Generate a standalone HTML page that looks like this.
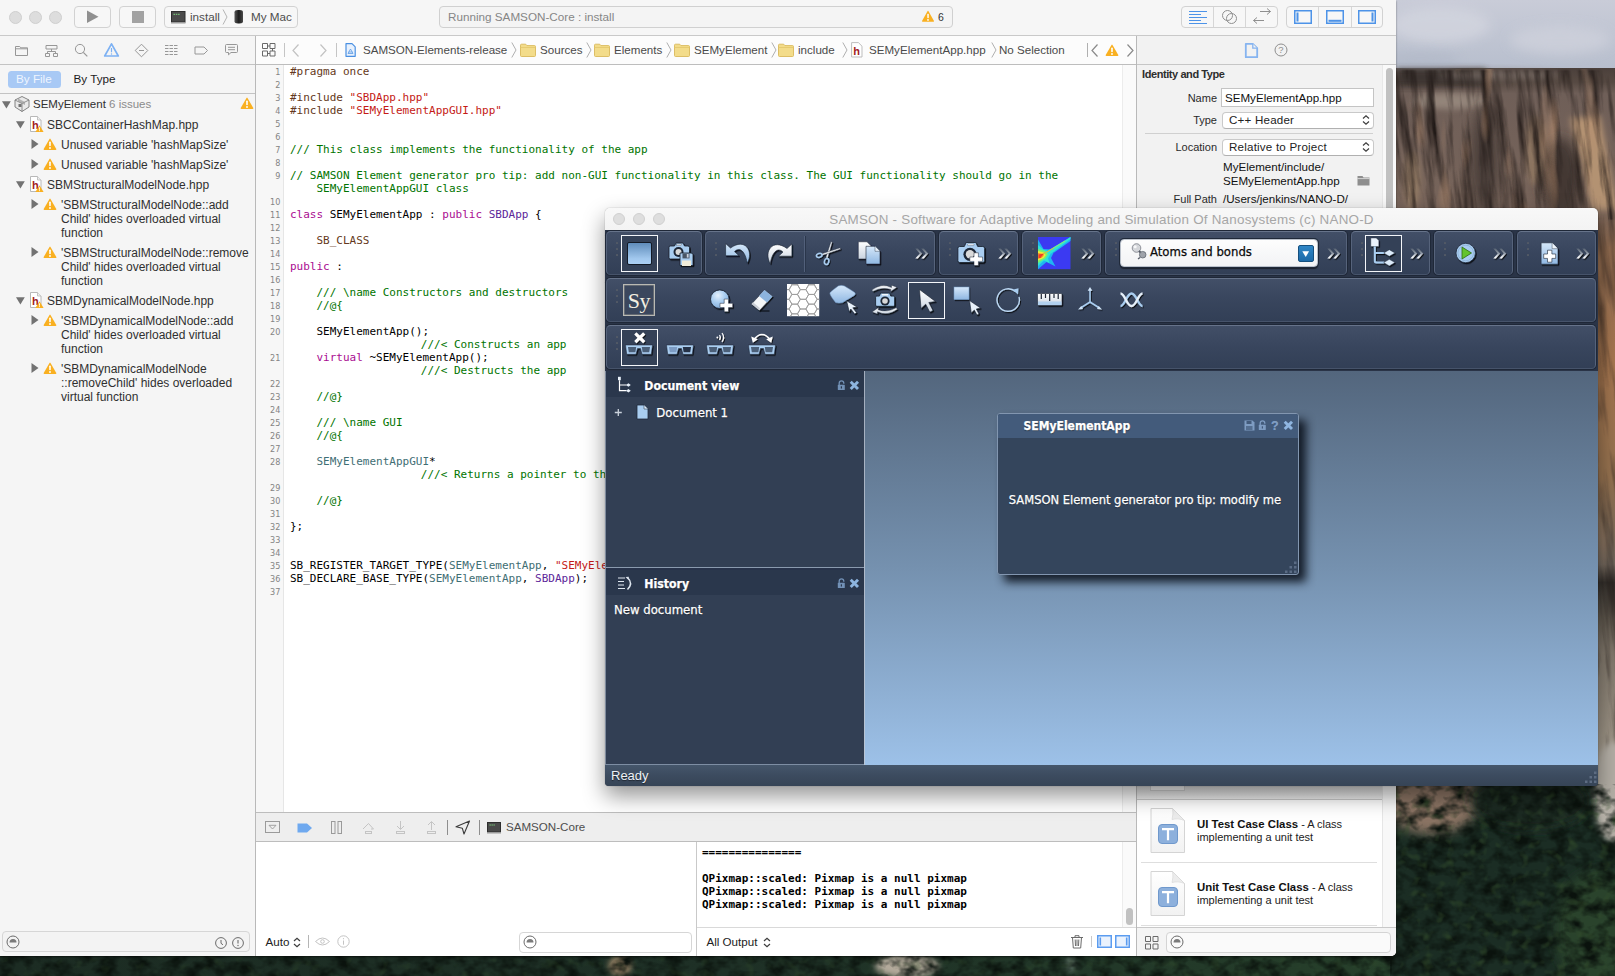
<!DOCTYPE html>
<html><head><meta charset="utf-8"><title>Xcode + SAMSON</title>
<style>
html,body{margin:0;padding:0}
body{width:1615px;height:976px;position:relative;overflow:hidden;background:#1f2e25;font-family:"Liberation Sans",sans-serif;font-size:11px;color:#262626}
.a{position:absolute}
.t{position:absolute;white-space:nowrap;line-height:14px}
svg{position:absolute;overflow:visible}
#xcode{position:absolute;left:0;top:0;width:1396px;height:956px;background:#f5f5f5;border-radius:0 0 5px 0;overflow:hidden;box-shadow:0 1px 2px rgba(0,0,0,.55)}
.hl{position:absolute;height:1px;background:#c3c3c3}
.vl{position:absolute;width:1px;background:#c3c3c3}
.btn{position:absolute;box-sizing:border-box;border:1px solid #d2d2d2;border-radius:4px;background:#f7f7f7}
.code{position:absolute;white-space:pre;font-family:"DejaVu Sans Mono","Liberation Mono",monospace;font-size:11px;line-height:13px;color:#000;left:290px}
.ln{position:absolute;width:24.300px;left:256px;text-align:right;font-family:"DejaVu Sans Condensed","Liberation Sans",sans-serif;font-size:9px;line-height:13px;color:#848484}
.c{color:#007400}.s{color:#c41a16}.k{color:#aa0d91}.p{color:#643820}.y{color:#3f6e74}.u{color:#5c2699}
.nav{position:absolute;white-space:nowrap;font-size:11.5px;line-height:14px;color:#262626;letter-spacing:0.1px}
#samson{position:absolute;left:605px;top:208px;width:993px;height:578px;border-radius:5px 5px 4px 4px;background:transparent;box-shadow:0 10px 22px rgba(0,0,0,.42),0 0 1px rgba(0,0,0,.5)}
.tb{position:absolute;box-sizing:border-box;border:1px solid #56637b;border-top-color:#66738a;border-bottom-color:#46536a;border-radius:4.5px;background:linear-gradient(#424f67,#39465e 45%,#323f56);box-shadow:0 0 0 1px #1f2838}
.sf{font-family:"DejaVu Sans Condensed","DejaVu Sans",sans-serif;-webkit-text-stroke:0.25px currentColor}
</style></head><body>
<!--WALL-->
<svg width="1615" height="976" style="left:0;top:0">
<defs>
<linearGradient id="gsky" x1="0" y1="0" x2="0" y2="1"><stop offset="0" stop-color="#c9ccd8"/><stop offset="1" stop-color="#b7becd"/></linearGradient>
<linearGradient id="grock" x1="0" y1="0" x2="0" y2="1">
<stop offset="0" stop-color="#4b403b"/><stop offset="0.02" stop-color="#574a43"/><stop offset="0.035" stop-color="#6f5f58"/>
<stop offset="0.19" stop-color="#77645a"/><stop offset="0.25" stop-color="#966f52"/><stop offset="0.4" stop-color="#a6764f"/><stop offset="0.56" stop-color="#94714f"/>
<stop offset="0.68" stop-color="#70665c"/><stop offset="0.705" stop-color="#34302c"/><stop offset="0.75" stop-color="#5d564c"/><stop offset="0.8" stop-color="#7f766a"/>
<stop offset="0.92" stop-color="#9d9486"/><stop offset="1" stop-color="#a8a195"/></linearGradient>
<linearGradient id="gtree" x1="0" y1="0" x2="1" y2="0"><stop offset="0" stop-color="#1c2c23"/><stop offset="0.45" stop-color="#1e3026"/><stop offset="0.75" stop-color="#233a29"/><stop offset="1" stop-color="#2c482d"/></linearGradient>
<filter id="fstreak" x="0" y="0" width="100%" height="100%" color-interpolation-filters="sRGB"><feTurbulence type="fractalNoise" baseFrequency="0.11 0.012" numOctaves="4" seed="4"/><feColorMatrix type="matrix" values="0 0 0 0 0.13  0 0 0 0 0.1  0 0 0 0 0.09  2.3 0 0 0 -0.95"/><feComposite in2="SourceGraphic" operator="in"/></filter>
<filter id="flight" x="0" y="0" width="100%" height="100%" color-interpolation-filters="sRGB"><feTurbulence type="fractalNoise" baseFrequency="0.05 0.012" numOctaves="2" seed="11"/><feColorMatrix type="matrix" values="0 0 0 0 0.72  0 0 0 0 0.56  0 0 0 0 0.44  0 2.4 0 0 -1.45"/><feComposite in2="SourceGraphic" operator="in"/></filter>
<filter id="ftree" x="0" y="0" width="100%" height="100%" color-interpolation-filters="sRGB"><feTurbulence type="fractalNoise" baseFrequency="0.06 0.08" numOctaves="3" seed="7"/><feColorMatrix type="matrix" values="0 0 0 0 0.04  0 0 0 0 0.07  0 0 0 0 0.05  2.4 0 0 0 -0.9"/><feComposite in2="SourceGraphic" operator="in"/></filter>
<filter id="ftreel" x="0" y="0" width="100%" height="100%" color-interpolation-filters="sRGB"><feTurbulence type="fractalNoise" baseFrequency="0.09 0.1" numOctaves="2" seed="21"/><feColorMatrix type="matrix" values="0 0 0 0 0.2  0 0 0 0 0.3  0 0 0 0 0.17  0 2 0 0 -1.12"/><feComposite in2="SourceGraphic" operator="in"/></filter>
<filter id="blur3" x="-60%" y="-60%" width="220%" height="220%"><feGaussianBlur stdDeviation="3"/></filter>
<filter id="blur6" x="-80%" y="-80%" width="260%" height="260%"><feGaussianBlur stdDeviation="6"/></filter>
</defs>
<rect x="0" y="940" width="1615" height="36" fill="url(#gtree)"/>
<rect x="1390" y="0" width="225" height="72" fill="url(#gsky)"/>
<rect x="1390" y="68" width="225" height="730" fill="url(#grock)"/>
<ellipse cx="1440" cy="25" rx="50" ry="18" fill="#d3d5df" filter="url(#blur6)" opacity=".8"/><ellipse cx="1560" cy="40" rx="50" ry="14" fill="#d0d3dd" filter="url(#blur6)" opacity=".7"/><ellipse cx="1420" cy="60" rx="40" ry="8" fill="#b2b9c8" filter="url(#blur6)" opacity=".8"/><rect x="1396" y="69" width="90" height="17" fill="#3d3431" filter="url(#blur3)"/><ellipse cx="1450" cy="101" rx="38" ry="8" fill="#9a8b80" filter="url(#blur3)" opacity=".85"/><path d="M1570 118 L1600 116 L1618 210 L1592 210 Z" fill="#b39272" filter="url(#blur3)"/><ellipse cx="1560" cy="178" rx="20" ry="40" fill="#372e2a" filter="url(#blur6)" opacity=".8"/><ellipse cx="1485" cy="160" rx="14" ry="55" fill="#3a312d" filter="url(#blur6)" opacity=".7"/><ellipse cx="1535" cy="150" rx="10" ry="35" fill="#a08468" filter="url(#blur3)" opacity=".6"/><ellipse cx="1412" cy="180" rx="8" ry="30" fill="#a68a6c" filter="url(#blur3)" opacity=".6"/><ellipse cx="1500" cy="75" rx="60" ry="5" fill="#7b6f69" filter="url(#blur3)" opacity=".7"/><g transform="skewX(6)"><rect x="1360" y="70" width="270" height="150" fill="#000" filter="url(#fstreak)"/><rect x="1330" y="220" width="300" height="578" fill="#000" filter="url(#fstreak)" opacity=".55"/></g>
<rect x="1390" y="69" width="225" height="150" fill="#000" filter="url(#flight)"/><rect x="1390" y="219" width="225" height="571" fill="#000" filter="url(#flight)" opacity=".45"/>
<rect x="1390" y="780" width="225" height="196" fill="#1b2d24"/>
<ellipse cx="1432" cy="800" rx="48" ry="34" fill="#8a7363" filter="url(#blur6)"/>
<ellipse cx="1613" cy="792" rx="20" ry="50" fill="#b3aea5" filter="url(#blur3)"/>
<ellipse cx="1530" cy="800" rx="60" ry="30" fill="#1c2c23" filter="url(#blur6)"/>
<ellipse cx="1600" cy="930" rx="45" ry="60" fill="#2d4a2f" filter="url(#blur6)" opacity=".8"/>
<rect x="1390" y="784" width="225" height="192" fill="#000" filter="url(#ftree)"/>
<rect x="1390" y="784" width="225" height="192" fill="#000" filter="url(#ftreel)"/>
<ellipse cx="907" cy="966" rx="32" ry="12" fill="#b3aa9b" filter="url(#blur3)"/>
<ellipse cx="620" cy="966" rx="11" ry="10" fill="#a98f6f" filter="url(#blur3)"/>
<ellipse cx="1071" cy="964" rx="5" ry="7" fill="#8fa09a" filter="url(#blur3)" opacity=".7"/>
<rect x="0" y="950" width="1392" height="26" fill="#000" filter="url(#ftree)"/>
<rect x="0" y="950" width="1392" height="26" fill="#000" filter="url(#ftreel)" opacity=".6"/>
</svg>
<!--/WALL-->
<div id="xcode">
<!--XTOOLBAR-->
<div class="a" style="left:0;top:0;width:1396px;height:35px;background:#f6f6f6"></div>
<div class="hl" style="left:0;top:35px;width:1396px;background:#c9c9c9"></div>
<div class="a" style="left:8.5px;top:10.5px;width:11px;height:11px;border-radius:50%;background:#dddddd;border:0.5px solid #cfcfcf"></div>
<div class="a" style="left:28.5px;top:10.5px;width:11px;height:11px;border-radius:50%;background:#dddddd;border:0.5px solid #cfcfcf"></div>
<div class="a" style="left:48.5px;top:10.5px;width:11px;height:11px;border-radius:50%;background:#dddddd;border:0.5px solid #cfcfcf"></div>
<div class="btn" style="left:74px;top:6px;width:37px;height:22px"></div>
<svg style="left:86px;top:10px" width="14" height="14"><path d="M1 0.5 L12.5 6.7 L1 13 Z" fill="#909090"/></svg>
<div class="btn" style="left:119px;top:6px;width:37px;height:22px"></div>
<div class="a" style="left:132px;top:11px;width:12px;height:12px;background:#a2a2a2"></div>
<div class="btn" style="left:164px;top:6px;width:134px;height:22px"></div>
<svg style="left:171px;top:11px" width="15" height="13"><rect x="0.5" y="0.5" width="13.5" height="10.5" fill="#4a4a4a" stroke="#2e2e2e"/><rect x="0" y="11" width="14.5" height="1.5" fill="#9a9a9a"/><rect x="2.5" y="2.8" width="1.5" height="1" fill="#7fd67f"/><rect x="4.8" y="2.8" width="1.5" height="1" fill="#7fd67f"/><rect x="7.1" y="2.8" width="1.5" height="1" fill="#7fd67f"/></svg>
<div class="t" style="left:190px;top:10px;font-size:11.7px;color:#4d4d4d">install</div>
<svg style="left:222px;top:9px" width="6" height="16"><path d="M1 0.5 L5 8 L1 15.5" fill="none" stroke="#b5b5b5" stroke-width="1"/></svg>
<svg style="left:234px;top:9px" width="10" height="16"><defs><linearGradient id="cyl" x1="0" x2="1"><stop offset="0" stop-color="#555"/><stop offset=".5" stop-color="#1d1d1d"/><stop offset="1" stop-color="#4a4a4a"/></linearGradient></defs><rect x="0.5" y="1" width="8.5" height="13.5" rx="3.5" ry="2.2" fill="url(#cyl)"/></svg>
<div class="t" style="left:251px;top:10px;font-size:11.7px;color:#4d4d4d">My Mac</div>
<div class="btn" style="left:439px;top:6px;width:514px;height:22px;background:#f4f4f4;border-color:#d0d0d0"></div>
<div class="t" style="left:448px;top:10px;font-size:11.7px;color:#868686">Running SAMSON-Core : install</div>
<svg style="left:921px;top:10px" width="14" height="13"><path d="M6.6 1 Q7 0.4 7.4 1 L13 11 Q13.2 11.8 12.4 11.8 L1.6 11.8 Q0.8 11.8 1 11 Z" fill="#f9b021"/><rect x="6.3" y="3.8" width="1.5" height="4.4" rx=".6" fill="#fff"/><circle cx="7" cy="9.9" r=".9" fill="#fff"/></svg>
<div class="t" style="left:938px;top:10px;font-size:10.5px;color:#333">6</div>
<div class="btn" style="left:1181px;top:6px;width:97px;height:22px"></div>
<div class="vl" style="left:1213px;top:7px;height:20px;background:#d6d6d6"></div><div class="vl" style="left:1245px;top:7px;height:20px;background:#d6d6d6"></div>
<svg style="left:1188px;top:10px" width="20" height="15"><path d="M1 1.5h18M1 4.5h12M1 7.5h18M1 10.5h12M1 13.5h18" stroke="#4d93e8" stroke-width="1" fill="none"/></svg>
<svg style="left:1221px;top:9px" width="18" height="16"><circle cx="6.5" cy="6.5" r="5" fill="none" stroke="#8f8f8f"/><circle cx="10.5" cy="9.5" r="5" fill="none" stroke="#8f8f8f"/></svg>
<svg style="left:1252px;top:10px" width="20" height="14"><path d="M8 1.5h10.5M15 -1.5l3.5 3-3.5 3M12 10.5H1.5M5 7.5l-3.5 3 3.5 3" stroke="#8f8f8f" fill="none" stroke-width="1"/></svg>
<div class="btn" style="left:1286px;top:6px;width:97px;height:22px"></div>
<div class="vl" style="left:1318px;top:7px;height:20px;background:#d6d6d6"></div><div class="vl" style="left:1351px;top:7px;height:20px;background:#d6d6d6"></div>
<svg style="left:1294px;top:10px" width="18" height="14"><rect x=".75" y=".75" width="16.5" height="12.5" fill="none" stroke="#4d93e8" stroke-width="1.5"/><rect x="2.5" y="2.5" width="2" height="9" fill="#4d93e8"/></svg>
<svg style="left:1326px;top:10px" width="18" height="14"><rect x=".75" y=".75" width="16.5" height="12.5" fill="none" stroke="#4d93e8" stroke-width="1.5"/><rect x="2.5" y="9.8" width="13" height="2" fill="#4d93e8"/></svg>
<svg style="left:1358px;top:10px" width="18" height="14"><rect x=".75" y=".75" width="16.5" height="12.5" fill="none" stroke="#4d93e8" stroke-width="1.5"/><rect x="13.5" y="2.5" width="2" height="9" fill="#4d93e8"/></svg>
<!--/XTOOLBAR-->
<!--XNAV-->
<div class="a" style="left:0;top:36px;width:255px;height:920px;background:#f5f5f5"></div>
<div class="hl" style="left:0;top:64px;width:255px"></div>
<div class="hl" style="left:0;top:93px;width:255px"></div>
<div class="vl" style="left:255px;top:36px;height:920px;background:#b9b9b9"></div>
<svg style="left:14px;top:44px" width="15" height="13"><path d="M1.5 2.5h4.2l1 1.3h6.8v7.7h-12z M1.5 4.8h12" fill="none" stroke="#979797" stroke-width="1"/></svg>
<svg style="left:44px;top:44px" width="15" height="13"><path d="M2 1.5h11v3.5h-11z M7.5 5v2.5 M3.5 9.5v-2h8v2 M1.5 9.5h4v3h-4z M9.5 9.5h4v3h-4z" fill="none" stroke="#979797" stroke-width="1"/></svg>
<svg style="left:74px;top:43px" width="15" height="15"><circle cx="6" cy="6" r="4.6" fill="none" stroke="#979797" stroke-width="1"/><path d="M9.3 9.3l4 4" stroke="#979797" stroke-width="1.2"/></svg>
<svg style="left:103px;top:42px" width="17" height="16"><path d="M8.5 1.8 L15.3 14 H1.7 Z" fill="none" stroke="#7db1f3" stroke-width="1.700" stroke-linejoin="round"/><path d="M8.500 6v4.300" stroke="#7db1f3" stroke-width="1.200"/><circle cx="8.500" cy="12" r=".7" fill="#7db1f3"/></svg>
<svg style="left:134px;top:43px" width="15" height="15"><path d="M7.5 1.2 L13.8 7.5 L7.5 13.8 L1.2 7.5 Z" fill="none" stroke="#979797" stroke-width="1" stroke-linejoin="round"/><path d="M5 7.5h5" stroke="#979797" stroke-width="1"/></svg>
<svg style="left:164px;top:44px" width="15" height="13"><path d="M1 1.5h3.5M5.5 1.5h3.5M10 1.5h3.5 M1 4.5h3.5M5.5 4.5h3.5M10 4.5h3.5 M1 7.5h3.5M5.5 7.5h3.5M10 7.5h3.5 M1 10.5h3.5M5.5 10.5h3.5M10 10.5h3.5" stroke="#979797" stroke-width="1"/></svg>
<svg style="left:194px;top:46px" width="15" height="9"><path d="M1 1h9l3.5 3.5 -3.5 3.5h-9z" fill="none" stroke="#979797" stroke-width="1" stroke-linejoin="round"/></svg>
<svg style="left:224px;top:43px" width="15" height="14"><path d="M2.5 1.5h10a1 1 0 0 1 1 1v6a1 1 0 0 1-1 1H7l-2.5 2.3V9.5h-2a1 1 0 0 1-1-1v-6a1 1 0 0 1 1-1z M4 4.3h7 M4 6.7h7" fill="none" stroke="#979797" stroke-width="1"/></svg>
<div class="a" style="left:8px;top:71px;width:53px;height:17px;border-radius:3.5px;background:#a8c9f5"></div>
<div class="t" style="left:16px;top:72px;font-size:11.7px;color:#eef5ff">By File</div>
<div class="t" style="left:73.5px;top:72px;font-size:11.7px;color:#1d1d1d">By Type</div>
<svg style="left:2.2px;top:100.5px" width="10" height="9"><path d="M0 0.300h8.800l-4.400 7.200z" fill="#727272"/></svg>
<svg style="left:13px;top:95px" width="18" height="18"><path d="M9 1.5 L16 5 V12 L9 16.5 L2 12 V5 Z" fill="#e9e9e9" stroke="#777" stroke-width=".9"/><path d="M2 5 L9 8.5 L16 5 M9 8.5 V16.5" fill="none" stroke="#777" stroke-width=".8"/><path d="M5 3.5 L12 7 V10 L5 6.5z" fill="#9a9a9a" opacity=".7"/><rect x="5.5" y="9" width="3" height="3" fill="#555" opacity=".8"/></svg>
<div class="nav" style="left:33px;top:96.8px;font-size:12px;letter-spacing:0;color:#303030;font-size:11.5px">SEMyElement <span style="color:#8b8b8b">6 issues</span></div>
<svg style="left:240px;top:97.2px" width="14" height="13" viewBox="0 0 14 13"><path d="M6.5 0.9 Q7 0.2 7.5 0.9 L13.3 11 Q13.6 12 12.6 12 L1.4 12 Q0.4 12 0.7 11 Z" fill="#f9b021"/><rect x="6.2" y="3.6" width="1.6" height="4.6" rx=".7" fill="#fff"/><circle cx="7" cy="10" r=".95" fill="#fff"/></svg>
<svg style="left:15.5px;top:120.5px" width="10" height="9"><path d="M0 0.300h8.800l-4.400 7.200z" fill="#727272"/></svg>
<svg style="left:29px;top:116px" width="15" height="17"><path d="M1.5 0.5h7l3.5 3.5v11.5h-10.5z" fill="#fff" stroke="#b8b8b8" stroke-width="1"/><path d="M8.5 0.5v3.5h3.5" fill="#eee" stroke="#b8b8b8" stroke-width=".8"/><text x="3" y="13" font-family="Liberation Sans,sans-serif" font-weight="700" font-size="11" fill="#a31d21">h</text><path d="M10.5 9.2 L14.6 16 H6.4 Z" fill="#f9b021"/><rect x="10.1" y="11.3" width=".9" height="2.4" fill="#fff"/><rect x="10.1" y="14.2" width=".9" height=".9" fill="#fff"/></svg>
<div class="nav" style="left:47px;top:117.5px;font-size:12px;letter-spacing:0;color:#303030">SBCContainerHashMap.hpp</div>
<svg style="left:31px;top:139px" width="8" height="10"><path d="M0.5 0l7 5-7 5z" fill="#727272"/></svg>
<svg style="left:43px;top:137.5px" width="14" height="13" viewBox="0 0 14 13"><path d="M6.5 0.9 Q7 0.2 7.5 0.9 L13.3 11 Q13.6 12 12.6 12 L1.4 12 Q0.4 12 0.7 11 Z" fill="#f9b021"/><rect x="6.2" y="3.6" width="1.6" height="4.6" rx=".7" fill="#fff"/><circle cx="7" cy="10" r=".95" fill="#fff"/></svg>
<div class="nav" style="left:61px;top:137.5px;font-size:12px;letter-spacing:0;color:#303030">Unused variable 'hashMapSize'</div>
<svg style="left:31px;top:159px" width="8" height="10"><path d="M0.5 0l7 5-7 5z" fill="#727272"/></svg>
<svg style="left:43px;top:157.5px" width="14" height="13" viewBox="0 0 14 13"><path d="M6.5 0.9 Q7 0.2 7.5 0.9 L13.3 11 Q13.6 12 12.6 12 L1.4 12 Q0.4 12 0.7 11 Z" fill="#f9b021"/><rect x="6.2" y="3.6" width="1.6" height="4.6" rx=".7" fill="#fff"/><circle cx="7" cy="10" r=".95" fill="#fff"/></svg>
<div class="nav" style="left:61px;top:157.5px;font-size:12px;letter-spacing:0;color:#303030">Unused variable 'hashMapSize'</div>
<svg style="left:15.5px;top:180.5px" width="10" height="9"><path d="M0 0.300h8.800l-4.400 7.200z" fill="#727272"/></svg>
<svg style="left:29px;top:176px" width="15" height="17"><path d="M1.5 0.5h7l3.5 3.5v11.5h-10.5z" fill="#fff" stroke="#b8b8b8" stroke-width="1"/><path d="M8.5 0.5v3.5h3.5" fill="#eee" stroke="#b8b8b8" stroke-width=".8"/><text x="3" y="13" font-family="Liberation Sans,sans-serif" font-weight="700" font-size="11" fill="#a31d21">h</text><path d="M10.5 9.2 L14.6 16 H6.4 Z" fill="#f9b021"/><rect x="10.1" y="11.3" width=".9" height="2.4" fill="#fff"/><rect x="10.1" y="14.2" width=".9" height=".9" fill="#fff"/></svg>
<div class="nav" style="left:47px;top:177.5px;font-size:12px;letter-spacing:0;color:#303030">SBMStructuralModelNode.hpp</div>
<svg style="left:31px;top:199px" width="8" height="10"><path d="M0.5 0l7 5-7 5z" fill="#727272"/></svg>
<svg style="left:43px;top:197.5px" width="14" height="13" viewBox="0 0 14 13"><path d="M6.5 0.9 Q7 0.2 7.5 0.9 L13.3 11 Q13.6 12 12.6 12 L1.4 12 Q0.4 12 0.7 11 Z" fill="#f9b021"/><rect x="6.2" y="3.6" width="1.6" height="4.6" rx=".7" fill="#fff"/><circle cx="7" cy="10" r=".95" fill="#fff"/></svg>
<div class="nav" style="left:61px;top:197.5px;font-size:12px;letter-spacing:0;color:#303030">'SBMStructuralModelNode::add</div>
<div class="nav" style="left:61px;top:211.5px;font-size:12px;letter-spacing:0;color:#303030">Child' hides overloaded virtual</div>
<div class="nav" style="left:61px;top:225.5px;font-size:12px;letter-spacing:0;color:#303030">function</div>
<svg style="left:31px;top:247px" width="8" height="10"><path d="M0.5 0l7 5-7 5z" fill="#727272"/></svg>
<svg style="left:43px;top:245.5px" width="14" height="13" viewBox="0 0 14 13"><path d="M6.5 0.9 Q7 0.2 7.5 0.9 L13.3 11 Q13.6 12 12.6 12 L1.4 12 Q0.4 12 0.7 11 Z" fill="#f9b021"/><rect x="6.2" y="3.6" width="1.6" height="4.6" rx=".7" fill="#fff"/><circle cx="7" cy="10" r=".95" fill="#fff"/></svg>
<div class="nav" style="left:61px;top:245.5px;font-size:12px;letter-spacing:0;color:#303030">'SBMStructuralModelNode::remove</div>
<div class="nav" style="left:61px;top:259.5px;font-size:12px;letter-spacing:0;color:#303030">Child' hides overloaded virtual</div>
<div class="nav" style="left:61px;top:273.5px;font-size:12px;letter-spacing:0;color:#303030">function</div>
<svg style="left:15.5px;top:296.5px" width="10" height="9"><path d="M0 0.300h8.800l-4.400 7.200z" fill="#727272"/></svg>
<svg style="left:29px;top:292px" width="15" height="17"><path d="M1.5 0.5h7l3.5 3.5v11.5h-10.5z" fill="#fff" stroke="#b8b8b8" stroke-width="1"/><path d="M8.5 0.5v3.5h3.5" fill="#eee" stroke="#b8b8b8" stroke-width=".8"/><text x="3" y="13" font-family="Liberation Sans,sans-serif" font-weight="700" font-size="11" fill="#a31d21">h</text><path d="M10.5 9.2 L14.6 16 H6.4 Z" fill="#f9b021"/><rect x="10.1" y="11.3" width=".9" height="2.4" fill="#fff"/><rect x="10.1" y="14.2" width=".9" height=".9" fill="#fff"/></svg>
<div class="nav" style="left:47px;top:293.5px;font-size:12px;letter-spacing:0;color:#303030">SBMDynamicalModelNode.hpp</div>
<svg style="left:31px;top:315px" width="8" height="10"><path d="M0.5 0l7 5-7 5z" fill="#727272"/></svg>
<svg style="left:43px;top:313.5px" width="14" height="13" viewBox="0 0 14 13"><path d="M6.5 0.9 Q7 0.2 7.5 0.9 L13.3 11 Q13.6 12 12.6 12 L1.4 12 Q0.4 12 0.7 11 Z" fill="#f9b021"/><rect x="6.2" y="3.6" width="1.6" height="4.6" rx=".7" fill="#fff"/><circle cx="7" cy="10" r=".95" fill="#fff"/></svg>
<div class="nav" style="left:61px;top:313.5px;font-size:12px;letter-spacing:0;color:#303030">'SBMDynamicalModelNode::add</div>
<div class="nav" style="left:61px;top:327.5px;font-size:12px;letter-spacing:0;color:#303030">Child' hides overloaded virtual</div>
<div class="nav" style="left:61px;top:341.5px;font-size:12px;letter-spacing:0;color:#303030">function</div>
<svg style="left:31px;top:363px" width="8" height="10"><path d="M0.5 0l7 5-7 5z" fill="#727272"/></svg>
<svg style="left:43px;top:361.5px" width="14" height="13" viewBox="0 0 14 13"><path d="M6.5 0.9 Q7 0.2 7.5 0.9 L13.3 11 Q13.6 12 12.6 12 L1.4 12 Q0.4 12 0.7 11 Z" fill="#f9b021"/><rect x="6.2" y="3.6" width="1.6" height="4.6" rx=".7" fill="#fff"/><circle cx="7" cy="10" r=".95" fill="#fff"/></svg>
<div class="nav" style="left:61px;top:361.5px;font-size:12px;letter-spacing:0;color:#303030">'SBMDynamicalModelNode</div>
<div class="nav" style="left:61px;top:375.5px;font-size:12px;letter-spacing:0;color:#303030">::removeChild' hides overloaded</div>
<div class="nav" style="left:61px;top:389.5px;font-size:12px;letter-spacing:0;color:#303030">virtual function</div>
<div class="a" style="left:1.5px;top:931px;width:248px;height:21px;box-sizing:border-box;border:1px solid #d6d6d6;border-radius:4px;background:#f3f3f3"></div>
<svg style="left:5.5px;top:935.4px" width="14" height="14"><circle cx="7" cy="7" r="6" fill="none" stroke="#6b6b6b" stroke-width="1"/><path d="M3.500 7.400 a3.500 3.500 0 0 1 7 0z" fill="#7a7a7a"/></svg>
<svg style="left:214.500px;top:936.500px" width="12" height="12"><circle cx="6" cy="6" r="5.400" fill="none" stroke="#6b6b6b" stroke-width="1"/><path d="M6 3v3.3l2 1.5" fill="none" stroke="#6b6b6b" stroke-width="1"/></svg>
<svg style="left:231.500px;top:936.500px" width="12" height="12"><circle cx="6" cy="6" r="5.400" fill="none" stroke="#6b6b6b" stroke-width="1"/><path d="M6 3v3.6" stroke="#6b6b6b" stroke-width="1.1"/><circle cx="6" cy="8.5" r=".7" fill="#6b6b6b"/></svg>
<!--/XNAV-->
<!--XEDITOR-->
<div class="a" style="left:256px;top:36px;width:880px;height:28px;background:#fcfcfc"></div>
<div class="a" style="left:256px;top:65px;width:880px;height:747px;background:#fff"></div>
<div class="a" style="left:256px;top:65px;width:27px;height:747px;background:#f7f7f7;border-right:1px solid #e6e6e6"></div>
<div class="a" style="left:1122px;top:65px;width:14px;height:747px;background:#fafafa;border-left:1px solid #ececec;box-sizing:border-box"></div>
<div class="hl" style="left:256px;top:64px;width:880px;background:#bdbdbd"></div>
<div class="vl" style="left:1136px;top:36px;height:920px;background:#b9b9b9"></div>
<svg style="left:262px;top:43px" width="14" height="14"><path d="M0.5 0.5h5v5h-5z M8 0.5h5v5h-5z M0.5 8h5v5h-5z M8 8h5v5h-5z M5.5 3h2.5 M5.5 10.5h2.5 M10.5 5.5v2.5" fill="none" stroke="#6a6a6a" stroke-width="1"/></svg>
<div class="vl" style="left:284px;top:43px;height:14px;background:#c5c5c5"></div>
<svg style="left:292px;top:44px" width="8" height="13"><path d="M6.5 0.5L1 6.5l5.5 6" fill="none" stroke="#c2c2c2" stroke-width="1.2"/></svg>
<svg style="left:319px;top:44px" width="8" height="13"><path d="M1.5 0.5L7 6.5l-5.5 6" fill="none" stroke="#c2c2c2" stroke-width="1.2"/></svg>
<div class="vl" style="left:336px;top:43px;height:14px;background:#c5c5c5"></div>
<svg style="left:345px;top:43px" width="11" height="14"><path d="M1 0.7h6l3.2 3.2v9.4H1z" fill="#e8f1fd" stroke="#4a90e2" stroke-width="1.2" stroke-linejoin="round"/><path d="M3 10.5l2.5-4.5 2.5 4.5z M3.6 9h3.8" fill="none" stroke="#4a90e2" stroke-width=".7"/></svg>
<div class="t" style="left:363px;top:43px;font-size:11.6px;color:#4a4a4a">SAMSON-Elements-release</div>
<svg style="left:511px;top:42px" width="6" height="16"><path d="M0.8 0.5 L5 8 L0.8 15.5" fill="none" stroke="#b0b0b0" stroke-width="1"/></svg>
<svg style="left:520px;top:43px" width="16" height="14"><path d="M0.5 2.2 q0-1 1-1 h4.2 l1.2 1.4 h7.6 q1 0 1 1 v8.9 q0 1-1 1 h-13 q-1 0-1-1z" fill="#f3dc8a" stroke="#d9b95a" stroke-width=".9"/><path d="M0.5 4.5h15" stroke="#e2c66b" stroke-width=".8"/></svg>
<div class="t" style="left:540px;top:43px;font-size:11.6px;color:#4a4a4a">Sources</div>
<svg style="left:586px;top:42px" width="6" height="16"><path d="M0.8 0.5 L5 8 L0.8 15.5" fill="none" stroke="#b0b0b0" stroke-width="1"/></svg>
<svg style="left:594px;top:43px" width="16" height="14"><path d="M0.5 2.2 q0-1 1-1 h4.2 l1.2 1.4 h7.6 q1 0 1 1 v8.9 q0 1-1 1 h-13 q-1 0-1-1z" fill="#f3dc8a" stroke="#d9b95a" stroke-width=".9"/><path d="M0.5 4.5h15" stroke="#e2c66b" stroke-width=".8"/></svg>
<div class="t" style="left:614px;top:43px;font-size:11.6px;color:#4a4a4a">Elements</div>
<svg style="left:666px;top:42px" width="6" height="16"><path d="M0.8 0.5 L5 8 L0.8 15.5" fill="none" stroke="#b0b0b0" stroke-width="1"/></svg>
<svg style="left:673.5px;top:43px" width="16" height="14"><path d="M0.5 2.2 q0-1 1-1 h4.2 l1.2 1.4 h7.6 q1 0 1 1 v8.9 q0 1-1 1 h-13 q-1 0-1-1z" fill="#f3dc8a" stroke="#d9b95a" stroke-width=".9"/><path d="M0.5 4.5h15" stroke="#e2c66b" stroke-width=".8"/></svg>
<div class="t" style="left:694px;top:43px;font-size:11.6px;color:#4a4a4a">SEMyElement</div>
<svg style="left:771px;top:42px" width="6" height="16"><path d="M0.8 0.5 L5 8 L0.8 15.5" fill="none" stroke="#b0b0b0" stroke-width="1"/></svg>
<svg style="left:778px;top:43px" width="16" height="14"><path d="M0.5 2.2 q0-1 1-1 h4.2 l1.2 1.4 h7.6 q1 0 1 1 v8.9 q0 1-1 1 h-13 q-1 0-1-1z" fill="#f3dc8a" stroke="#d9b95a" stroke-width=".9"/><path d="M0.5 4.5h15" stroke="#e2c66b" stroke-width=".8"/></svg>
<div class="t" style="left:798px;top:43px;font-size:11.6px;color:#4a4a4a">include</div>
<svg style="left:842px;top:42px" width="6" height="16"><path d="M0.8 0.5 L5 8 L0.8 15.5" fill="none" stroke="#b0b0b0" stroke-width="1"/></svg>
<svg style="left:851px;top:42px" width="12" height="16"><path d="M0.6 0.6h6.8l3.6 3.6v10.8H0.6z" fill="#fff" stroke="#bdbdbd" stroke-width="1"/><text x="2.3" y="13" font-family="Liberation Sans,sans-serif" font-weight="700" font-size="11" fill="#a31d21">h</text></svg>
<div class="t" style="left:869px;top:43px;font-size:11.6px;color:#4a4a4a">SEMyElementApp.hpp</div>
<svg style="left:991px;top:42px" width="6" height="16"><path d="M0.8 0.5 L5 8 L0.8 15.5" fill="none" stroke="#b0b0b0" stroke-width="1"/></svg>
<div class="t" style="left:999px;top:43px;font-size:11.6px;color:#4a4a4a">No Selection</div>
<div class="vl" style="left:1087px;top:43px;height:14px;background:#b0b0b0"></div>
<svg style="left:1091px;top:44px" width="8" height="13"><path d="M6.5 0.5L1 6.5l5.5 6" fill="none" stroke="#8a8a8a" stroke-width="1.2"/></svg>
<svg style="left:1105px;top:43.5px" width="14" height="13" viewBox="0 0 14 13"><path d="M6.5 0.9 Q7 0.2 7.5 0.9 L13.3 11 Q13.6 12 12.6 12 L1.4 12 Q0.4 12 0.7 11 Z" fill="#f9b021"/><rect x="6.2" y="3.6" width="1.6" height="4.6" rx=".7" fill="#fff"/><circle cx="7" cy="10" r=".95" fill="#fff"/></svg>
<svg style="left:1126px;top:44px" width="8" height="13"><path d="M1.5 0.5L7 6.5l-5.5 6" fill="none" stroke="#8a8a8a" stroke-width="1.2"/></svg>
<div class="ln" style="top:66px">1</div>
<div class="code" style="top:65px"><span class="p">#pragma once</span></div>
<div class="ln" style="top:79px">2</div>
<div class="ln" style="top:92px">3</div>
<div class="code" style="top:91px"><span class="p">#include </span><span class="s">"SBDApp.hpp"</span></div>
<div class="ln" style="top:105px">4</div>
<div class="code" style="top:104px"><span class="p">#include </span><span class="s">"SEMyElementAppGUI.hpp"</span></div>
<div class="ln" style="top:118px">5</div>
<div class="ln" style="top:131px">6</div>
<div class="ln" style="top:144px">7</div>
<div class="code" style="top:143px"><span class="c">/// This class implements the functionality of the app</span></div>
<div class="ln" style="top:157px">8</div>
<div class="ln" style="top:170px">9</div>
<div class="code" style="top:169px"><span class="c">// SAMSON Element generator pro tip: add non-GUI functionality in this class. The GUI functionality should go in the</span></div>
<div class="code" style="top:182px"><span class="c">    SEMyElementAppGUI class</span></div>
<div class="ln" style="top:196px">10</div>
<div class="ln" style="top:209px">11</div>
<div class="code" style="top:208px"><span class="k">class</span> SEMyElementApp : <span class="k">public</span> <span class="u">SBDApp</span> {</div>
<div class="ln" style="top:222px">12</div>
<div class="ln" style="top:235px">13</div>
<div class="code" style="top:234px">    <span class="p">SB_CLASS</span></div>
<div class="ln" style="top:248px">14</div>
<div class="ln" style="top:261px">15</div>
<div class="code" style="top:260px"><span class="k">public</span> :</div>
<div class="ln" style="top:274px">16</div>
<div class="ln" style="top:287px">17</div>
<div class="code" style="top:286px">    <span class="c">/// \name Constructors and destructors</span></div>
<div class="ln" style="top:300px">18</div>
<div class="code" style="top:299px">    <span class="c">//@{</span></div>
<div class="ln" style="top:313px">19</div>
<div class="ln" style="top:326px">20</div>
<div class="code" style="top:325px">    SEMyElementApp();</div>
<div class="code" style="top:338px"><span style="display:inline-block;width:130.800px"></span><span class="c">///&lt; Constructs an app</span></div>
<div class="ln" style="top:352px">21</div>
<div class="code" style="top:351px">    <span class="k">virtual</span> ~SEMyElementApp();</div>
<div class="code" style="top:364px"><span style="display:inline-block;width:130.800px"></span><span class="c">///&lt; Destructs the app</span></div>
<div class="ln" style="top:378px">22</div>
<div class="ln" style="top:391px">23</div>
<div class="code" style="top:390px">    <span class="c">//@}</span></div>
<div class="ln" style="top:404px">24</div>
<div class="ln" style="top:417px">25</div>
<div class="code" style="top:416px">    <span class="c">/// \name GUI</span></div>
<div class="ln" style="top:430px">26</div>
<div class="code" style="top:429px">    <span class="c">//@{</span></div>
<div class="ln" style="top:443px">27</div>
<div class="ln" style="top:456px">28</div>
<div class="code" style="top:455px">    <span class="y">SEMyElementAppGUI</span>*</div>
<div class="code" style="top:468px"><span style="display:inline-block;width:130.800px"></span><span class="c">///&lt; Returns a pointer to the GUI of the app</span></div>
<div class="ln" style="top:482px">29</div>
<div class="ln" style="top:495px">30</div>
<div class="code" style="top:494px">    <span class="c">//@}</span></div>
<div class="ln" style="top:508px">31</div>
<div class="ln" style="top:521px">32</div>
<div class="code" style="top:520px">};</div>
<div class="ln" style="top:534px">33</div>
<div class="ln" style="top:547px">34</div>
<div class="ln" style="top:560px">35</div>
<div class="code" style="top:559px">SB_REGISTER_TARGET_TYPE(<span class="y">SEMyElementApp</span>, <span class="s">"SEMyElementApp"</span>, <span class="s">"F2078F9E-F2CB-BA72-EE86-1E01A10B63D4"</span>);</div>
<div class="ln" style="top:573px">36</div>
<div class="code" style="top:572px">SB_DECLARE_BASE_TYPE(<span class="y">SEMyElementApp</span>, <span class="u">SBDApp</span>);</div>
<div class="ln" style="top:586px">37</div>
<!--/XEDITOR-->
<!--XINSPECTOR-->
<div class="a" style="left:1137px;top:36px;width:259px;height:920px;background:#f2f2f2"></div>
<div class="hl" style="left:1137px;top:64px;width:259px;background:#c6c6c6"></div>
<div class="a" style="left:1382px;top:65px;width:14px;height:150px;background:#f9f9f9;border-left:1px solid #e8e8e8;box-sizing:border-box"></div>
<div class="a" style="left:1386px;top:68px;width:7px;height:150px;border-radius:3.5px;background:#c1c1c1"></div>
<svg style="left:1245px;top:43px" width="13" height="15"><path d="M0.8 0.8h7l4.4 4.4v9H0.8z" fill="#f2f2f2" stroke="#86b4f0" stroke-width="1.8" stroke-linejoin="round"/><path d="M7.8 0.8v4.4h4.4" fill="#f2f2f2" stroke="#86b4f0" stroke-width="1.3"/></svg>
<svg style="left:1274px;top:43px" width="14" height="14"><circle cx="7" cy="7" r="6" fill="none" stroke="#8e8e8e" stroke-width="1"/><text x="7" y="10.3" text-anchor="middle" font-family="Liberation Sans,sans-serif" font-size="9.5" fill="#8e8e8e">?</text></svg>
<div class="t" style="left:1142px;top:67px;font-size:11px;font-weight:700;letter-spacing:-0.42px;color:#2e2e2e">Identity and Type</div>
<div class="t" style="left:1137px;width:80px;text-align:right;top:91px;font-size:11px;color:#2a2a2a">Name</div>
<div class="t" style="left:1137px;width:80px;text-align:right;top:113px;font-size:11px;color:#2a2a2a">Type</div>
<div class="t" style="left:1137px;width:80px;text-align:right;top:140px;font-size:11px;color:#2a2a2a">Location</div>
<div class="t" style="left:1137px;width:80px;text-align:right;top:192px;font-size:11px;color:#2a2a2a">Full Path</div>
<div class="a" style="left:1221px;top:88px;width:153px;height:19px;box-sizing:border-box;border:1px solid #c4c4c4;background:#fff"></div>
<div class="t" style="left:1225px;top:91px;font-size:11.6px;color:#111">SEMyElementApp.hpp</div>
<div class="a" style="left:1221.5px;top:111.5px;width:152px;height:17px;box-sizing:border-box;border:1px solid #c9c9c9;border-bottom-color:#b0b0b0;border-radius:4px;background:#fff"></div>
<div class="t" style="left:1229px;top:113.0px;font-size:11.6px;color:#222;letter-spacing:0.2px">C++ Header</div>
<svg style="left:1362px;top:115.0px" width="8" height="10"><path d="M1 3.5l3-2.7 3 2.7 M1 6.5l3 2.7 3-2.7" fill="none" stroke="#3d3d3d" stroke-width="1.2"/></svg>
<div class="a" style="left:1221.5px;top:138.5px;width:152px;height:17px;box-sizing:border-box;border:1px solid #c9c9c9;border-bottom-color:#b0b0b0;border-radius:4px;background:#fff"></div>
<div class="t" style="left:1229px;top:140.0px;font-size:11.6px;color:#222;letter-spacing:0.2px">Relative to Project</div>
<svg style="left:1362px;top:142.0px" width="8" height="10"><path d="M1 3.5l3-2.7 3 2.7 M1 6.5l3 2.7 3-2.7" fill="none" stroke="#3d3d3d" stroke-width="1.2"/></svg>
<div class="hl" style="left:1145px;top:133px;width:228px;background:#d0d0d0"></div>
<div class="t" style="left:1223px;top:160px;font-size:11.6px;color:#111">MyElement/include/</div>
<div class="t" style="left:1223px;top:174px;font-size:11.6px;color:#111">SEMyElementApp.hpp</div>
<div class="t" style="left:1223px;top:192px;font-size:11.6px;color:#111">/Users/jenkins/NANO-D/</div>
<svg style="left:1357px;top:175px" width="13" height="11"><path d="M0.5 1h5l1 1.5h6v8H0.5z" fill="#8e8e8e"/><path d="M0.5 3.6h12" stroke="#f2f2f2" stroke-width=".7"/></svg>
<div class="a" style="left:1137px;top:786px;width:259px;height:14px;background:linear-gradient(#dcdcdc,#f0f0f0)"></div>
<div class="hl" style="left:1137px;top:799px;width:245px;background:#c9c9c9"></div>
<div class="a" style="left:1137px;top:800px;width:245px;height:127px;background:#fff"></div>
<div class="a" style="left:1382px;top:786px;width:14px;height:141px;background:#f8f8f8;border-left:1px solid #e6e6e6;box-sizing:border-box"></div>
<div class="a" style="left:1150px;top:786px;width:35px;height:5px;background:#f4f4f4;border:1px solid #d0d0d0;border-top:none;box-sizing:border-box"></div>
<svg style="left:1149px;top:807px" width="38" height="48"><defs><linearGradient id="dg807" x1="0" y1="0" x2="0" y2="1"><stop offset="0" stop-color="#ffffff"/><stop offset="1" stop-color="#f2f2f2"/></linearGradient></defs><path d="M2 1.5h21.5l12 12V45.5H2z" fill="url(#dg807)" stroke="#d4d4d4" stroke-width="1"/><path d="M23.5 1.5c1 5 0 8-.5 11 4-1 8-1 12.500 1z" fill="#ececec" stroke="#d8d8d8" stroke-width=".7"/><rect x="9.500" y="17.500" width="19" height="19" rx="3.500" fill="#8db0dc" stroke="#6f98cc" stroke-width="1"/><path d="M13 22.200h12 M19 22.200v11" stroke="#fff" stroke-width="2.200" fill="none"/></svg>
<div class="t" style="left:1197px;top:816.5px;font-size:11px;color:#222"><b style="font-size:11.400px;letter-spacing:0;color:#111">UI Test Case Class</b> - A class</div>
<div class="t" style="left:1197px;top:829.5px;font-size:11px;color:#222">implementing a unit test</div>
<svg style="left:1149px;top:870px" width="38" height="48"><defs><linearGradient id="dg870" x1="0" y1="0" x2="0" y2="1"><stop offset="0" stop-color="#ffffff"/><stop offset="1" stop-color="#f2f2f2"/></linearGradient></defs><path d="M2 1.5h21.5l12 12V45.5H2z" fill="url(#dg870)" stroke="#d4d4d4" stroke-width="1"/><path d="M23.5 1.5c1 5 0 8-.5 11 4-1 8-1 12.500 1z" fill="#ececec" stroke="#d8d8d8" stroke-width=".7"/><rect x="9.500" y="17.500" width="19" height="19" rx="3.500" fill="#8db0dc" stroke="#6f98cc" stroke-width="1"/><path d="M13 22.200h12 M19 22.200v11" stroke="#fff" stroke-width="2.200" fill="none"/></svg>
<div class="t" style="left:1197px;top:879.5px;font-size:11px;color:#222"><b style="font-size:11.400px;letter-spacing:0;color:#111">Unit Test Case Class</b> - A class</div>
<div class="t" style="left:1197px;top:892.5px;font-size:11px;color:#222">implementing a unit test</div>
<div class="hl" style="left:1141px;top:862px;width:236px;background:#dedede"></div>
<div class="hl" style="left:1141px;top:925px;width:236px;background:#dedede"></div>
<div class="hl" style="left:1137px;top:927px;width:259px;background:#c9c9c9"></div>
<div class="a" style="left:1137px;top:928px;width:259px;height:28px;background:#f4f4f4"></div>
<svg style="left:1145px;top:936px" width="14" height="14"><path d="M0.5 0.5h5v5h-5z M8 0.5h5v5h-5z M0.5 8h5v5h-5z M8 8h5v5h-5z" fill="none" stroke="#6a6a6a" stroke-width="1"/></svg>
<div class="a" style="left:1165.5px;top:931.5px;width:225px;height:21px;box-sizing:border-box;border:1px solid #d4d4d4;border-radius:4px;background:#fafafa"></div>
<svg style="left:1169.500px;top:935.400px" width="14" height="14"><circle cx="7" cy="7" r="6" fill="none" stroke="#6b6b6b" stroke-width="1"/><path d="M3.500 7.400 a3.500 3.500 0 0 1 7 0z" fill="#7a7a7a"/></svg>
<!--/XINSPECTOR-->
<!--XDEBUG-->
<div class="hl" style="left:256px;top:812px;width:880px;background:#bdbdbd"></div>
<div class="a" style="left:256px;top:813px;width:880px;height:28px;background:#eeeeee"></div>
<div class="hl" style="left:256px;top:841px;width:880px;background:#bdbdbd"></div>
<div class="a" style="left:256px;top:842px;width:880px;height:114px;background:#fff"></div>
<div class="vl" style="left:696px;top:842px;height:114px;background:#c9c9c9"></div>
<div class="hl" style="left:697px;top:927px;width:439px;background:#d9d9d9"></div>
<svg style="left:265px;top:821px" width="16" height="13"><rect x=".5" y=".5" width="14" height="11" fill="none" stroke="#9a9a9a"/><path d="M4 4.300h7l-3.500 3.700z" fill="none" stroke="#9a9a9a" stroke-width=".9"/></svg>
<svg style="left:297px;top:823px" width="16" height="10"><path d="M0.500 0.500h9.500l5 4.500-5 4.500H0.500z" fill="#6fa9ef"/></svg>
<svg style="left:331px;top:821px" width="12" height="13"><rect x=".5" y=".5" width="3.500" height="12" fill="none" stroke="#9a9a9a"/><rect x="7" y=".5" width="3.500" height="12" fill="none" stroke="#9a9a9a"/></svg>
<svg style="left:362px;top:821px" width="14" height="13"><path d="M1 8l5.500-5.500 5 5.500h-2.500" fill="none" stroke="#c4c4c4"/><rect x="3.500" y="10.500" width="6" height="2" fill="none" stroke="#c4c4c4"/></svg>
<svg style="left:395px;top:821px" width="11" height="13"><path d="M5.500 0v8 M2 5l3.500 3.500 3.500-3.500" fill="none" stroke="#c4c4c4"/><rect x="1.500" y="10.500" width="8" height="2" fill="none" stroke="#c4c4c4"/></svg>
<svg style="left:425.500px;top:821px" width="11" height="13"><path d="M5.500 9v-8 M2 4l3.500-3.500 3.500 3.500" fill="none" stroke="#c4c4c4"/><rect x="1.500" y="10.500" width="8" height="2" fill="none" stroke="#c4c4c4"/></svg>
<div class="vl" style="left:447px;top:820px;height:15px;background:#8e8e8e"></div>
<svg style="left:455px;top:820px" width="16" height="15"><path d="M14.500 1 L9 14 L7.300 8.200 L1 6.800 Z" fill="none" stroke="#3b3b3b" stroke-width="1.100" stroke-linejoin="round"/></svg>
<div class="vl" style="left:479px;top:820px;height:15px;background:#8e8e8e"></div>
<svg style="left:487px;top:822px" width="15" height="13"><rect x="0.5" y="0.5" width="13" height="9.500" fill="#4a4a4a" stroke="#2e2e2e"/><rect x="0" y="10" width="14" height="1.500" fill="#9a9a9a"/><rect x="2.500" y="2.500" width="1.300" height="1" fill="#7fd67f"/><rect x="4.500" y="2.500" width="1.300" height="1" fill="#7fd67f"/><rect x="6.500" y="2.500" width="1.300" height="1" fill="#7fd67f"/></svg>
<div class="t" style="left:506px;top:820px;font-size:11.6px;color:#4d4d4d">SAMSON-Core</div>
<div class="t" style="left:265.500px;top:935px;font-size:11.6px;color:#222">Auto</div>
<svg style="left:293px;top:937px" width="8" height="11"><path d="M1 4l3-2.800 3 2.800 M1 7l3 2.800 3-2.800" fill="none" stroke="#3d3d3d" stroke-width="1.200"/></svg>
<div class="vl" style="left:308px;top:935px;height:13px;background:#b5b5b5"></div>
<svg style="left:315px;top:936px" width="15" height="11"><path d="M0.500 5.500 Q7.500 -1.500 14.500 5.500 Q7.500 12.500 0.500 5.500z" fill="none" stroke="#c4c4c4"/><circle cx="7.500" cy="5.500" r="1.800" fill="none" stroke="#c4c4c4"/></svg>
<svg style="left:337px;top:935px" width="13" height="13"><circle cx="6.500" cy="6.500" r="5.700" fill="none" stroke="#c4c4c4"/><path d="M6.500 5.500v4.200" stroke="#c4c4c4"/><circle cx="6.500" cy="3.700" r=".6" fill="#c4c4c4"/></svg>
<div class="a" style="left:518.500px;top:931.500px;width:173px;height:21px;box-sizing:border-box;border:1px solid #d6d6d6;border-radius:4px;background:#fff"></div>
<svg style="left:522.500px;top:935.400px" width="14" height="14"><circle cx="7" cy="7" r="6" fill="none" stroke="#6b6b6b" stroke-width="1"/><path d="M3.500 7.400 a3.500 3.500 0 0 1 7 0z" fill="#7a7a7a"/></svg>
<div class="a" style="left:702px;top:846px;font-family:'DejaVu Sans Mono','Liberation Mono',monospace;font-weight:700;font-size:11px;line-height:13px;color:#000;white-space:pre">===============</div>
<div class="a" style="left:702px;top:872px;font-family:'DejaVu Sans Mono','Liberation Mono',monospace;font-weight:700;font-size:11px;line-height:13px;color:#000;white-space:pre">QPixmap::scaled: Pixmap is a null pixmap</div>
<div class="a" style="left:702px;top:885px;font-family:'DejaVu Sans Mono','Liberation Mono',monospace;font-weight:700;font-size:11px;line-height:13px;color:#000;white-space:pre">QPixmap::scaled: Pixmap is a null pixmap</div>
<div class="a" style="left:702px;top:898px;font-family:'DejaVu Sans Mono','Liberation Mono',monospace;font-weight:700;font-size:11px;line-height:13px;color:#000;white-space:pre">QPixmap::scaled: Pixmap is a null pixmap</div>
<div class="a" style="left:1122px;top:842px;width:14px;height:85px;background:#fafafa;border-left:1px solid #ececec;box-sizing:border-box"></div>
<div class="a" style="left:1125.500px;top:908px;width:7px;height:17px;border-radius:3.500px;background:#c1c1c1"></div>
<div class="t" style="left:706.500px;top:935px;font-size:11.600px;color:#222">All Output</div>
<svg style="left:762.500px;top:937px" width="8" height="11"><path d="M1 4l3-2.800 3 2.800 M1 7l3 2.800 3-2.800" fill="none" stroke="#3d3d3d" stroke-width="1.200"/></svg>
<svg style="left:1070px;top:934px" width="14" height="15"><path d="M1 3.500h12 M5 3.500v-1.800h4v1.800 M2.500 3.500l.8 10.500h7.400l.8-10.500 M5.200 5.500l.3 6.500 M7 5.500v6.500 M8.800 5.500l-.3 6.500" fill="none" stroke="#6b6b6b" stroke-width="1"/></svg>
<div class="vl" style="left:1091px;top:936px;height:11px;background:#c9c9c9"></div>
<svg style="left:1097px;top:935px" width="15" height="13"><rect x=".75" y=".75" width="13.500" height="11.500" fill="#eaf2fd" stroke="#5b9cf0" stroke-width="1.500"/><rect x="2.500" y="2.500" width="1.600" height="8" fill="#5b9cf0"/></svg>
<svg style="left:1115px;top:935px" width="15" height="13"><rect x=".75" y=".75" width="13.500" height="11.500" fill="#eaf2fd" stroke="#5b9cf0" stroke-width="1.500"/><rect x="10.900" y="2.500" width="1.600" height="8" fill="#5b9cf0"/></svg>
<!--/XDEBUG-->
</div>
<!--SAMSON-->
<div id="samson">
<div class="a" style="left:0;top:0;width:993px;height:22px;border-radius:5px 5px 0 0;background:linear-gradient(#f8f8f8,#f3f3f3)"></div>
<div class="a" style="left:8px;top:5px;width:12px;height:12px;border-radius:50%;background:#dedede;border:0.5px solid #d0d0d0;box-sizing:border-box"></div>
<div class="a" style="left:28px;top:5px;width:12px;height:12px;border-radius:50%;background:#dedede;border:0.5px solid #d0d0d0;box-sizing:border-box"></div>
<div class="a" style="left:48px;top:5px;width:12px;height:12px;border-radius:50%;background:#dedede;border:0.5px solid #d0d0d0;box-sizing:border-box"></div>
<div class="t" style="left:0;width:993px;text-align:center;top:4px;font-size:13.4px;letter-spacing:0.23px;color:#a6a6a6;line-height:16px">SAMSON - Software for Adaptive Modeling and Simulation Of Nanosystems (c) NANO-D</div>
<div class="a" style="left:0;top:22px;width:993px;height:556px;background:#2a3447;border-radius:0 0 4px 4px"></div>
<div class="tb" style="left:1px;top:23px;width:96px;height:44px"></div>
<div class="a" style="left:11px;top:34px;width:2px;height:2px;background:#535a66;border-radius:.5px"></div>
<div class="a" style="left:11px;top:40px;width:2px;height:2px;background:#535a66;border-radius:.5px"></div>
<div class="a" style="left:11px;top:46px;width:2px;height:2px;background:#535a66;border-radius:.5px"></div>
<div class="tb" style="left:100px;top:23px;width:230px;height:44px"></div>
<div class="a" style="left:110px;top:34px;width:2px;height:2px;background:#535a66;border-radius:.5px"></div>
<div class="a" style="left:110px;top:40px;width:2px;height:2px;background:#535a66;border-radius:.5px"></div>
<div class="a" style="left:110px;top:46px;width:2px;height:2px;background:#535a66;border-radius:.5px"></div>
<div class="tb" style="left:333.5px;top:23px;width:79.5px;height:44px"></div>
<div class="a" style="left:343.5px;top:34px;width:2px;height:2px;background:#535a66;border-radius:.5px"></div>
<div class="a" style="left:343.5px;top:40px;width:2px;height:2px;background:#535a66;border-radius:.5px"></div>
<div class="a" style="left:343.5px;top:46px;width:2px;height:2px;background:#535a66;border-radius:.5px"></div>
<div class="tb" style="left:416.8px;top:23px;width:79.2px;height:44px"></div>
<div class="a" style="left:426.8px;top:34px;width:2px;height:2px;background:#535a66;border-radius:.5px"></div>
<div class="a" style="left:426.8px;top:40px;width:2px;height:2px;background:#535a66;border-radius:.5px"></div>
<div class="a" style="left:426.8px;top:46px;width:2px;height:2px;background:#535a66;border-radius:.5px"></div>
<div class="tb" style="left:499.5px;top:23px;width:242.0px;height:44px"></div>
<div class="a" style="left:509.5px;top:34px;width:2px;height:2px;background:#535a66;border-radius:.5px"></div>
<div class="a" style="left:509.5px;top:40px;width:2px;height:2px;background:#535a66;border-radius:.5px"></div>
<div class="a" style="left:509.5px;top:46px;width:2px;height:2px;background:#535a66;border-radius:.5px"></div>
<div class="tb" style="left:745.5px;top:23px;width:79.0px;height:44px"></div>
<div class="a" style="left:755.5px;top:34px;width:2px;height:2px;background:#535a66;border-radius:.5px"></div>
<div class="a" style="left:755.5px;top:40px;width:2px;height:2px;background:#535a66;border-radius:.5px"></div>
<div class="a" style="left:755.5px;top:46px;width:2px;height:2px;background:#535a66;border-radius:.5px"></div>
<div class="tb" style="left:828.5px;top:23px;width:79.0px;height:44px"></div>
<div class="a" style="left:838.5px;top:34px;width:2px;height:2px;background:#535a66;border-radius:.5px"></div>
<div class="a" style="left:838.5px;top:40px;width:2px;height:2px;background:#535a66;border-radius:.5px"></div>
<div class="a" style="left:838.5px;top:46px;width:2px;height:2px;background:#535a66;border-radius:.5px"></div>
<div class="tb" style="left:911.5px;top:23px;width:79.3px;height:44px"></div>
<div class="a" style="left:921.5px;top:34px;width:2px;height:2px;background:#535a66;border-radius:.5px"></div>
<div class="a" style="left:921.5px;top:40px;width:2px;height:2px;background:#535a66;border-radius:.5px"></div>
<div class="a" style="left:921.5px;top:46px;width:2px;height:2px;background:#535a66;border-radius:.5px"></div>
<div class="tb" style="left:1px;top:70px;width:989.8px;height:43.5px"></div>
<div class="a" style="left:11px;top:81px;width:2px;height:2px;background:#535a66;border-radius:.5px"></div>
<div class="a" style="left:11px;top:87px;width:2px;height:2px;background:#535a66;border-radius:.5px"></div>
<div class="a" style="left:11px;top:93px;width:2px;height:2px;background:#535a66;border-radius:.5px"></div>
<div class="tb" style="left:1px;top:117px;width:989.8px;height:44px"></div>
<div class="a" style="left:11px;top:128px;width:2px;height:2px;background:#535a66;border-radius:.5px"></div>
<div class="a" style="left:11px;top:134px;width:2px;height:2px;background:#535a66;border-radius:.5px"></div>
<div class="a" style="left:11px;top:140px;width:2px;height:2px;background:#535a66;border-radius:.5px"></div>
<svg width="0" height="0" style="left:0;top:0"><defs>
<linearGradient id="bl" x1="0" y1="0" x2="0" y2="1"><stop offset="0" stop-color="#d6e8fa"/><stop offset="1" stop-color="#8fb7e2"/></linearGradient>
<linearGradient id="blr" x1="0" y1="0" x2="0" y2="1"><stop offset="0" stop-color="#6a98c6"/><stop offset="1" stop-color="#afd2f3"/></linearGradient>
<linearGradient id="wh" x1="0" y1="0" x2="0" y2="1"><stop offset="0" stop-color="#ffffff"/><stop offset="1" stop-color="#c9d3df"/></linearGradient>
<linearGradient id="chv" x1="0" y1="0" x2="0" y2="1"><stop offset="0" stop-color="#596474"/><stop offset=".45" stop-color="#8993a1"/><stop offset=".8" stop-color="#e4e8ec"/><stop offset="1" stop-color="#ffffff"/></linearGradient>
<filter id="ds" x="-30%" y="-30%" width="170%" height="170%"><feDropShadow dx="1" dy="1.2" stdDeviation="0.7" flood-color="#000" flood-opacity=".75"/></filter>
</defs></svg>
<div class="a" style="left:15.8px;top:27px;width:37.5px;height:37.2px;box-sizing:border-box;border:1px solid #f4f6f9;background:#344157"></div>
<div class="a" style="left:22px;top:34px;width:24.5px;height:23px;box-sizing:border-box;border:1px solid #131a26;border-radius:2px;background:linear-gradient(#5f8cba,#a2c8ee 75%,#abd0f3)"></div>
<svg style="left:62px;top:32px" width="28" height="28" ><g filter="url(#ds)"><path d="M2 7.500q0-1.500 1.500-1.500h4l1.500-3h7l1.500 3h3.500q1.500 0 1.500 1.500v10q0 1.500-1.500 1.500h-17.500q-1.500 0-1.500-1.500z" fill="#a9cdf0" stroke="#141c28" stroke-width=".8"/><rect x="9.500" y="4" width="5" height="1.600" fill="#eef4fa" stroke="#41536b" stroke-width=".4"/><circle cx="11.500" cy="12" r="5" fill="#1d2636"/><circle cx="11.500" cy="12" r="3" fill="#d9d9d9"/><path d="M13 13h11.500l1.500 1.500v11h-13z" fill="#a9cdf0" stroke="#141c28" stroke-width=".8"/><rect x="15.500" y="13.400" width="7" height="5" fill="#4a5565"/><rect x="19.800" y="14" width="1.800" height="3.600" fill="#c9d3df"/><rect x="15" y="20.500" width="9" height="5.500" fill="#f1ecd9"/></g></svg>
<svg style="left:118px;top:33px" width="30" height="24" ><g filter="url(#ds)"><path d="M2.600 2.500 L2.600 14.700 L16 14.700 L11.500 10.600 C15 6.800 21.500 7 24.300 22.200 C31 10 22 -3.500 7.500 7 Z" fill="url(#bl)" stroke="#1a2333" stroke-width=".6" stroke-linejoin="round"/></g></svg>
<svg style="left:160px;top:33px" width="30" height="24" ><g filter="url(#ds)"><path transform="translate(29.500,0.500) scale(-1,1)" d="M2.600 2.500 L2.600 14.700 L16 14.700 L11.500 10.600 C15 6.800 21.500 7 24.300 22.200 C31 10 22 -3.500 7.500 7 Z" fill="url(#wh)" stroke="#1a2333" stroke-width=".6" stroke-linejoin="round"/></g></svg>
<div class="a" style="left:199px;top:28px;width:1px;height:36px;background:#52607a"></div>
<div class="a" style="left:200px;top:28px;width:1px;height:36px;background:#2a364b"></div>
<svg style="left:209px;top:32px" width="28" height="28" ><g filter="url(#ds)"><path d="M17 1.600 L18.300 2.200 L13.600 18.500 L11.800 17.500 Z" fill="#f2f5f9" stroke="#1a2333" stroke-width=".4"/><path d="M26.200 7.800 L26.600 9.200 L8.200 15.500 L7.600 13.800 Z" fill="#f2f5f9" stroke="#1a2333" stroke-width=".4"/><ellipse cx="5.200" cy="15.400" rx="2.900" ry="2" transform="rotate(-18 5.200 15.400)" fill="none" stroke="#a9cdf0" stroke-width="1.500"/><ellipse cx="12.600" cy="21.500" rx="2.200" ry="3" transform="rotate(14 12.600 21.500)" fill="none" stroke="#a9cdf0" stroke-width="1.500"/></g></svg>
<svg style="left:251px;top:32px" width="26" height="27" ><g filter="url(#ds)"><path d="M2.300 1.800h8.700l4 4v13.200h-12.700z" fill="url(#wh)" stroke="#1a2333" stroke-width=".5"/><path d="M10 6.300h9l5 5v12.800h-14z" fill="url(#bl)" stroke="#1a2333" stroke-width=".6"/><path d="M19 6.300v5h5" fill="#e9f2fb" stroke="#1a2333" stroke-width=".4"/></g></svg>
<svg style="left:310px;top:39.5px" width="14" height="11" ><g filter="url(#ds)"><path d="M0.300 0.500h2.500l4.400 5-4.400 5H0.300l4.400-5z M6.300 0.500h2.500l4.400 5-4.400 5H6.300l4.400-5z" fill="url(#chv)"/></g></svg>
<svg style="left:351px;top:31px" width="32" height="30" ><g filter="url(#ds)"><path d="M1.900 9.300q0-1.800 1.800-1.800h4.600l1.900-4h9.600l1.900 4h5.100q1.800 0 1.800 1.800v12.400q0 1.800-1.800 1.800h-23.100q-1.800 0-1.800-1.800z" fill="#a9cdf0" stroke="#141c28" stroke-width=".8"/><rect x="11.500" y="4.800" width="6.500" height="1.800" rx=".5" fill="#f4f8fc" stroke="#41536b" stroke-width=".4"/><circle cx="14" cy="15.300" r="6.600" fill="#1d2636"/><circle cx="14" cy="15.300" r="4.200" fill="#d9d9d9"/><path d="M13.800 18h4.200v-4.200h4.400v4.200h4.200v4.400h-4.200v4.200h-4.400v-4.200h-4.200z" fill="#fff" stroke="#1a2333" stroke-width=".5"/></g></svg>
<svg style="left:393px;top:39.5px" width="14" height="11" ><g filter="url(#ds)"><path d="M0.300 0.500h2.500l4.400 5-4.400 5H0.300l4.400-5z M6.300 0.500h2.500l4.400 5-4.400 5H6.300l4.400-5z" fill="url(#chv)"/></g></svg>
<svg style="left:432.8px;top:28.9px" width="32.5" height="32.2" ><rect width="32.500" height="32.200" fill="#3b3af2"/><path d="M32.500 0 L14 12.500 L15.500 16 L32.500 4 Z" fill="#1fb4f2"/><path d="M0 2.500 L5.500 12 L14 12.500 L15.500 16 L13 21 L17.500 29.500 L8.500 25 L0 32.200 Z" fill="#1fb4f2"/><path d="M32.500 0 L10 13.500 L12.500 17 L32.500 2 Z" fill="#2fe3d6"/><path d="M0 8 L6 13 L11 14 L12.500 17 L10 21.500 L11.500 26 L6 23.500 L0 29 Z" fill="#2fe3d6"/><path d="M0 12 L7 14 L10 17 L7.500 21.500 L4 23.500 L0 26 Z" fill="#7df06a"/><path d="M0 14 L5.500 15.500 L7.800 18 L5.500 21 L0 23.500 Z" fill="#f4ec36"/><path d="M0 16 L4.500 16.800 L5.800 18.800 L3.500 20.800 L0 22 Z" fill="#f6922a"/><path d="M0.500 17.500 L6.500 16.500 L3.800 19 L2.500 21 L0.500 21 Z" fill="#ee3a2a"/><path d="M8 15.500 L27 4" stroke="#a8ea55" stroke-width=".8"/><path d="M5 17 L16 11" stroke="#f2a33a" stroke-width=".7"/></svg>
<svg style="left:475.6px;top:39.5px" width="14" height="11" ><g filter="url(#ds)"><path d="M0.300 0.500h2.500l4.400 5-4.400 5H0.300l4.400-5z M6.300 0.500h2.500l4.400 5-4.400 5H6.300l4.400-5z" fill="url(#chv)"/></g></svg>
<div class="a" style="left:514.8px;top:31px;width:198.5px;height:28px;box-sizing:border-box;border:1px solid #b9c0ca;border-radius:4px;background:linear-gradient(#fdfdfd,#f2f3f5);box-shadow:0 0 0 1px #1f2939,0 1.500px 1px rgba(0,0,0,.5)"></div>
<svg style="left:526px;top:35px" width="17" height="18" ><circle cx="5.500" cy="5" r="4.300" fill="#d4d6da" stroke="#6a6f78" stroke-width=".7"/><circle cx="4.200" cy="3.700" r="1.500" fill="#fff" opacity=".8"/><path d="M8 8l3 3" stroke="#555b66" stroke-width="1.800"/><circle cx="11.700" cy="11.700" r="3.300" fill="#9fa3aa" stroke="#555b66" stroke-width=".7"/><path d="M9 14.500l-2 1.500" stroke="#555b66" stroke-width="1.300"/></svg>
<div class="t sf" style="left:545px;top:36px;font-size:13px;line-height:16px;color:#0a0a0a">Atoms and bonds</div>
<div class="a" style="left:692.7px;top:37px;width:16.5px;height:17px;box-sizing:border-box;border:1px solid #15507f;border-radius:2px;background:linear-gradient(#2f86c6,#1c6aa8)"></div>
<svg style="left:697.3px;top:43px" width="8" height="7" ><path d="M0.300 0.300h6.800l-3.400 5.700z" fill="#fff"/></svg>
<svg style="left:722px;top:39.5px" width="14" height="11" ><g filter="url(#ds)"><path d="M0.300 0.500h2.500l4.400 5-4.400 5H0.300l4.400-5z M6.300 0.500h2.500l4.400 5-4.400 5H6.300l4.400-5z" fill="url(#chv)"/></g></svg>
<div class="a" style="left:760px;top:27px;width:37px;height:36.7px;box-sizing:border-box;border:1px solid #f4f6f9;background:#344157"></div>
<svg style="left:764px;top:29px" width="30" height="32" ><g filter="url(#ds)"><path d="M1.800 1h5.500l2.500 2.500v6h-8z" fill="#eaf2fb" stroke="#1a2333" stroke-width=".4"/><path d="M5.800 9.500v14.600q0 1.500 1.500 1.500h8 M5.800 16h9.500" fill="none" stroke="#a9cdf0" stroke-width="2"/><path d="M14.700 16l5.600-3.300 5.600 3.300-5.600 3.300z" fill="#dcebfa" stroke="#1a2333" stroke-width=".4"/><path d="M14.700 25.600l5.600-3.300 5.600 3.300-5.600 3.300z" fill="#dcebfa" stroke="#1a2333" stroke-width=".4"/></g></svg>
<svg style="left:805px;top:39.5px" width="14" height="11" ><g filter="url(#ds)"><path d="M0.300 0.500h2.500l4.400 5-4.400 5H0.300l4.400-5z M6.300 0.500h2.500l4.400 5-4.400 5H6.300l4.400-5z" fill="url(#chv)"/></g></svg>
<svg style="left:849px;top:33.5px" width="24" height="23" ><g filter="url(#ds)"><circle cx="11.700" cy="11" r="9.700" fill="#a9cdf0" stroke="#1a2333" stroke-width=".7"/><circle cx="11.700" cy="11" r="7.800" fill="none" stroke="#7fa6cf" stroke-width=".6"/><path d="M8 5l9.500 6-9.500 6z" fill="#63c32d" stroke="#2d6a12" stroke-width=".8" stroke-linejoin="round"/></g></svg>
<svg style="left:887.8px;top:39.5px" width="14" height="11" ><g filter="url(#ds)"><path d="M0.300 0.500h2.500l4.400 5-4.400 5H0.300l4.400-5z M6.300 0.500h2.500l4.400 5-4.400 5H6.300l4.400-5z" fill="url(#chv)"/></g></svg>
<svg style="left:933.5px;top:32px" width="22" height="27" ><g filter="url(#ds)"><path d="M2.100 2.800h11l5.900 5.900v15.500h-16.900z" fill="url(#bl)" stroke="#1a2333" stroke-width=".6"/><path d="M13.100 2.800v5.900h5.900" fill="#eef5fc" stroke="#1a2333" stroke-width=".4"/><path d="M4.700 14h3.800v-3.800h4.400v3.800h3.800v4.400h-3.800v3.800h-4.400v-3.800h-3.800z" fill="#fff" stroke="#1a2333" stroke-width=".6"/></g></svg>
<svg style="left:970.8px;top:39.5px" width="14" height="11" ><g filter="url(#ds)"><path d="M0.300 0.500h2.500l4.400 5-4.400 5H0.300l4.400-5z M6.300 0.500h2.500l4.400 5-4.400 5H6.300l4.400-5z" fill="url(#chv)"/></g></svg>
<div class="a" style="left:17.8px;top:75.8px;width:32.2px;height:32.2px;box-sizing:border-box;border:1px solid #b9b9b3;background:#3b475d;box-shadow:inset 0 0 0 .5px #8e8e8a"></div>
<div class="t" style="left:17.8px;width:32.2px;text-align:center;top:80px;font-family:'Liberation Serif',serif;font-size:22px;line-height:26px;color:#f3efe2;letter-spacing:-0.5px">Sy</div>
<svg style="left:103px;top:79px" width="28" height="28" ><defs><radialGradient id="sph" cx=".4" cy=".3" r=".75"><stop offset="0" stop-color="#e6f1fc"/><stop offset=".5" stop-color="#a9cdf0"/><stop offset="1" stop-color="#7fa9d6"/></radialGradient></defs><g filter="url(#ds)"><circle cx="11.800" cy="12.200" r="9.300" fill="url(#sph)" stroke="#141c28" stroke-width=".8"/><path d="M12 16.300h4.200v-4.200h4.300v4.200h4.200v4.300h-4.200v4.200h-4.300v-4.200h-4.200z" fill="#fff" stroke="#1a2333" stroke-width=".5"/></g></svg>
<svg style="left:144px;top:79px" width="27" height="26" ><g filter="url(#ds)"><path d="M2.500 17 L15.500 3 L23.500 9.500 L10.500 23.500 Z" fill="#f4f6f8" stroke="#1a2333" stroke-width=".5" stroke-linejoin="round"/><path d="M10 9 L15.500 3 L23.500 9.500 L18 15.500 Z" fill="#8db4de"/><path d="M2.500 17 L10.500 23.500 L10.800 21 L4 15.300z" fill="#c9ced6"/></g><path d="M10.500 24h10" stroke="#0c1118" stroke-width="1.200"/></svg>
<svg style="left:182px;top:76px" width="32.2" height="32.2" ><defs><clipPath id="hxc"><rect width="32.200" height="32.200"/></clipPath></defs><rect width="32.200" height="32.200" fill="#fff"/><g clip-path="url(#hxc)" fill="none" stroke="#9d9d9d" stroke-width=".9"><polygon points="4.90,0.75 2.10,5.60 -3.50,5.60 -6.30,0.75 -3.50,-4.10 2.10,-4.10"/><polygon points="4.90,10.45 2.10,15.30 -3.50,15.30 -6.30,10.45 -3.50,5.60 2.10,5.60"/><polygon points="4.90,20.15 2.10,25.00 -3.50,25.00 -6.30,20.15 -3.50,15.30 2.10,15.30"/><polygon points="4.90,29.85 2.10,34.70 -3.50,34.70 -6.30,29.85 -3.50,25.00 2.10,25.00"/><polygon points="4.90,39.55 2.10,44.40 -3.50,44.40 -6.30,39.55 -3.50,34.70 2.10,34.70"/><polygon points="4.90,49.25 2.10,54.10 -3.50,54.10 -6.30,49.25 -3.50,44.40 2.10,44.40"/><polygon points="13.30,-4.10 10.50,0.75 4.90,0.75 2.10,-4.10 4.90,-8.95 10.50,-8.95"/><polygon points="13.30,5.60 10.50,10.45 4.90,10.45 2.10,5.60 4.90,0.75 10.50,0.75"/><polygon points="13.30,15.30 10.50,20.15 4.90,20.15 2.10,15.30 4.90,10.45 10.50,10.45"/><polygon points="13.30,25.00 10.50,29.85 4.90,29.85 2.10,25.00 4.90,20.15 10.50,20.15"/><polygon points="13.30,34.70 10.50,39.55 4.90,39.55 2.10,34.70 4.90,29.85 10.50,29.85"/><polygon points="13.30,44.40 10.50,49.25 4.90,49.25 2.10,44.40 4.90,39.55 10.50,39.55"/><polygon points="21.70,0.75 18.90,5.60 13.30,5.60 10.50,0.75 13.30,-4.10 18.90,-4.10"/><polygon points="21.70,10.45 18.90,15.30 13.30,15.30 10.50,10.45 13.30,5.60 18.90,5.60"/><polygon points="21.70,20.15 18.90,25.00 13.30,25.00 10.50,20.15 13.30,15.30 18.90,15.30"/><polygon points="21.70,29.85 18.90,34.70 13.30,34.70 10.50,29.85 13.30,25.00 18.90,25.00"/><polygon points="21.70,39.55 18.90,44.40 13.30,44.40 10.50,39.55 13.30,34.70 18.90,34.70"/><polygon points="21.70,49.25 18.90,54.10 13.30,54.10 10.50,49.25 13.30,44.40 18.90,44.40"/><polygon points="30.10,-4.10 27.30,0.75 21.70,0.75 18.90,-4.10 21.70,-8.95 27.30,-8.95"/><polygon points="30.10,5.60 27.30,10.45 21.70,10.45 18.90,5.60 21.70,0.75 27.30,0.75"/><polygon points="30.10,15.30 27.30,20.15 21.70,20.15 18.90,15.30 21.70,10.45 27.30,10.45"/><polygon points="30.10,25.00 27.30,29.85 21.70,29.85 18.90,25.00 21.70,20.15 27.30,20.15"/><polygon points="30.10,34.70 27.30,39.55 21.70,39.55 18.90,34.70 21.70,29.85 27.30,29.85"/><polygon points="30.10,44.40 27.30,49.25 21.70,49.25 18.90,44.40 21.70,39.55 27.30,39.55"/><polygon points="38.50,0.75 35.70,5.60 30.10,5.60 27.30,0.75 30.10,-4.10 35.70,-4.10"/><polygon points="38.50,10.45 35.70,15.30 30.10,15.30 27.30,10.45 30.10,5.60 35.70,5.60"/><polygon points="38.50,20.15 35.70,25.00 30.10,25.00 27.30,20.15 30.10,15.30 35.70,15.30"/><polygon points="38.50,29.85 35.70,34.70 30.10,34.70 27.30,29.85 30.10,25.00 35.70,25.00"/><polygon points="38.50,39.55 35.70,44.40 30.10,44.40 27.30,39.55 30.10,34.70 35.70,34.70"/><polygon points="38.50,49.25 35.70,54.10 30.10,54.10 27.30,49.25 30.10,44.40 35.70,44.40"/><polygon points="46.90,-4.10 44.10,0.75 38.50,0.75 35.70,-4.10 38.50,-8.95 44.10,-8.95"/><polygon points="46.90,5.60 44.10,10.45 38.50,10.45 35.70,5.60 38.50,0.75 44.10,0.75"/><polygon points="46.90,15.30 44.10,20.15 38.50,20.15 35.70,15.30 38.50,10.45 44.10,10.45"/><polygon points="46.90,25.00 44.10,29.85 38.50,29.85 35.70,25.00 38.50,20.15 44.10,20.15"/><polygon points="46.90,34.70 44.10,39.55 38.50,39.55 35.70,34.70 38.50,29.85 44.10,29.85"/><polygon points="46.90,44.40 44.10,49.25 38.50,49.25 35.70,44.40 38.50,39.55 44.10,39.55"/><polygon points="55.30,0.75 52.50,5.60 46.90,5.60 44.10,0.75 46.90,-4.10 52.50,-4.10"/><polygon points="55.30,10.45 52.50,15.30 46.90,15.30 44.10,10.45 46.90,5.60 52.50,5.60"/><polygon points="55.30,20.15 52.50,25.00 46.90,25.00 44.10,20.15 46.90,15.30 52.50,15.30"/><polygon points="55.30,29.85 52.50,34.70 46.90,34.70 44.10,29.85 46.90,25.00 52.50,25.00"/><polygon points="55.30,39.55 52.50,44.40 46.90,44.40 44.10,39.55 46.90,34.70 52.50,34.70"/><polygon points="55.30,49.25 52.50,54.10 46.90,54.10 44.10,49.25 46.90,44.40 52.50,44.40"/></g></svg>
<svg style="left:223px;top:76px" width="33" height="33" ><g filter="url(#ds)"><path d="M1.900 9.100 Q2 8 10.400 1.900 Q13.300 1 16.200 1.900 Q26.500 8 27.100 9.100 Q27.500 10.600 26.300 11.400 L14.500 18.600 Q11 19.500 7.700 18.600 Q2.600 12 2.300 10.600 Z" fill="url(#bl)" stroke="#7fa6d2" stroke-width=".5"/><path d="M18.600 16.800 L29 23 L24.800 23.800 L28.600 28.800 L26.700 30 L22.800 25 L21.300 28.100 Z" fill="#e9f2fb" stroke="#1a2333" stroke-width=".6" stroke-linejoin="round"/></g></svg>
<svg style="left:264px;top:76px" width="32" height="33" ><g filter="url(#ds)"><path d="M6.600 13.300 q0-1.200 1.200-1.200h2.600l1.200-3h9l1.200 3h2.600q1.200 0 1.200 1.200v7.800q0 1.200-1.200 1.200h-16.600q-1.200 0-1.200-1.200z" fill="#a9cdf0" stroke="#141c28" stroke-width=".8"/><rect x="13" y="10" width="6" height="1.400" fill="#f4f8fc"/><circle cx="16" cy="17" r="4.600" fill="#1d2636"/><circle cx="16" cy="17" r="2.800" fill="#d9d9d9"/><path d="M2.700 6 Q13 -1.500 22.500 3.500 L22.500 1.200 L28 3.300 L21.500 7.800 L21.800 5.600 Q13 2.500 4 7.500z" fill="url(#wh)" stroke="#1a2333" stroke-width=".4"/><path d="M28.500 25.300 Q18 32.800 8.500 27.800 L8.500 30.100 L3 28 L9.500 23.500 L9.200 25.700 Q18 28.800 27.200 23.800z" fill="url(#wh)" stroke="#1a2333" stroke-width=".4"/></g></svg>
<div class="a" style="left:302.8px;top:74px;width:37.0px;height:37px;box-sizing:border-box;border:1px solid #f4f6f9;background:#344157"></div>
<svg style="left:310px;top:79px" width="24" height="28" ><g filter="url(#ds)"><path d="M4.500 2.500 L20.500 14.500 L13.800 15.500 L18 23.500 L14.800 25.200 L10.700 17.200 L6 21.500 Z" fill="url(#wh)" stroke="#1a2333" stroke-width=".6" stroke-linejoin="round"/></g></svg>
<svg style="left:347px;top:77px" width="32" height="32" ><g filter="url(#ds)"><rect x="2" y="2" width="15" height="12.500" fill="url(#bl)" stroke="#6f97c4" stroke-width=".5"/><path d="M17.500 15.500 L28.500 23 L24.300 24 L27 29 L25 30.100 L22.300 25.100 L19.300 28 Z" fill="#e9f2fb" stroke="#1a2333" stroke-width=".6" stroke-linejoin="round"/></g></svg>
<svg style="left:389px;top:78px" width="30" height="28" ><g filter="url(#ds)"><path d="M21.500 5.500 A11.200 11.200 0 1 0 25 11" fill="none" stroke="#bcd8f3" stroke-width="1.400"/><path d="M18.500 3.800 L24.500 2.200 L24 8.500 Z" fill="#a9cdf0"/></g></svg>
<svg style="left:430.5px;top:84px" width="28" height="16" ><g filter="url(#ds)"><rect x="1.500" y="1.500" width="24.500" height="12" rx="1" fill="url(#wh)" stroke="#1a2333" stroke-width=".6"/><path d="M5.300 2v5 M9.500 2v4 M13.700 2v7 M18 2v4 M22.200 2v5" stroke="#1a2333" stroke-width="1.200"/><rect x="2" y="9.500" width="23.500" height="3.500" fill="#a9cdf0" opacity=".8"/></g></svg>
<svg style="left:472px;top:78px" width="27" height="28" ><g filter="url(#ds)"><path d="M13 4v12 M13 16 L3.500 22 M13 16 L22.500 22" stroke="#a9cdf0" stroke-width="1.500" fill="none"/><path d="M13 1l2.300 3.800h-4.600z M1 23.500l3.300-3.500 1.700 3z M25 23.500l-3.300-3.500 -1.700 3z" fill="#cfe3f8"/></g></svg>
<svg style="left:513.5px;top:83px" width="26" height="18" ><g filter="url(#ds)"><path d="M1.500 15 C6 15 7.500 2.500 12.500 2.500 C17.500 2.500 19 15 23.500 15" fill="none" stroke="#a9cdf0" stroke-width="2.300"/><path d="M1.500 2.500 C6 2.500 7.500 15 12.500 15 C17.500 15 19 2.500 23.500 2.500" fill="none" stroke="#e6f0fa" stroke-width="2.300"/></g></svg>
<div class="a" style="left:16px;top:121.3px;width:37px;height:36.4px;box-sizing:border-box;border:1px solid #f4f6f9;background:#344157"></div>
<svg style="left:19.8px;top:135.5px" width="30" height="14" ><g filter="url(#ds)"><path d="M0.500 1h27l-1.200 9.300h-9.300l-1.500-5.800h-3l-1.500 5.800h-9.300z" fill="#a9cdf0" stroke="#1a2333" stroke-width=".5" stroke-linejoin="round"/><path d="M3 3h8.200l-.8 5.300h-6.600z" fill="#4b5e78"/><path d="M16.800 3h8.200l-.8 5.300h-6.600z" fill="#4b5e78"/></g></svg>
<svg style="left:27.5px;top:123px" width="14" height="14" ><g filter="url(#ds)"><path d="M2.300 2.300 L11.200 11.200 M11.200 2.300 L2.300 11.200" stroke="#fff" stroke-width="3.100" fill="none"/></g></svg>
<svg style="left:60.6px;top:135.5px" width="30" height="14" ><g filter="url(#ds)"><path d="M0.500 1h27l-1.200 9.300h-9.300l-1.500-5.800h-3l-1.500 5.800h-9.300z" fill="#a9cdf0" stroke="#1a2333" stroke-width=".5" stroke-linejoin="round"/><path d="M3 3h8.200l-.8 5.300h-6.600z" fill="#7d9cc4"/><path d="M16.800 3h8.200l-.8 5.300h-6.600z" fill="#253247"/></g></svg>
<svg style="left:101.2px;top:135.5px" width="30" height="14" ><g filter="url(#ds)"><path d="M0.500 1h27l-1.200 9.300h-9.300l-1.500-5.800h-3l-1.500 5.800h-9.300z" fill="#a9cdf0" stroke="#1a2333" stroke-width=".5" stroke-linejoin="round"/><path d="M3 3h8.200l-.8 5.300h-6.600z" fill="#4b5e78"/><path d="M16.800 3h8.200l-.8 5.300h-6.600z" fill="#4b5e78"/></g></svg>
<svg style="left:110px;top:122.5px" width="13" height="13" ><g filter="url(#ds)"><circle cx="2.300" cy="6.500" r=".9" fill="#fff"/><path d="M4.500 4 Q6.200 6.500 4.500 9 M7 2 Q10.200 6.500 7 11" fill="none" stroke="#fff" stroke-width="1.200"/></g></svg>
<svg style="left:142.8px;top:135.5px" width="30" height="14" ><g filter="url(#ds)"><path d="M0.500 1h27l-1.200 9.300h-9.300l-1.500-5.800h-3l-1.500 5.800h-9.300z" fill="#a9cdf0" stroke="#1a2333" stroke-width=".5" stroke-linejoin="round"/><path d="M3 3h8.200l-.8 5.300h-6.600z" fill="#4b5e78"/><path d="M16.800 3h8.200l-.8 5.300h-6.600z" fill="#4b5e78"/></g></svg>
<svg style="left:145px;top:123px" width="24" height="13" ><g filter="url(#ds)"><path d="M3.500 9 Q12 -2 20.500 9" fill="none" stroke="#fff" stroke-width="1.300"/><path d="M1.200 5.500 L2.800 11.800 L7.800 8.300z M22.800 5.500 L21.200 11.800 L16.200 8.300z" fill="#fff"/></g></svg>
<div class="a" style="left:259px;top:162.5px;width:734px;height:394.5px;background:linear-gradient(#53667d,#7591af 50%,#9dc1e8)"></div>
<div class="a" style="left:258.5px;top:162.5px;width:1.500px;height:394.5px;background:linear-gradient(#a3adbd,#b9c6d6)"></div>
<div class="a" style="left:1px;top:162.5px;width:257.5px;height:196.0px;background:#323f54"></div>
<div class="a" style="left:1px;top:162.5px;width:257.5px;height:26px;background:#2a374c"></div>
<div class="t sf" style="left:39.3px;top:169.5px;font-size:12.2px;font-weight:700;line-height:16px;color:#fff;text-shadow:0 1px 1px rgba(0,0,0,.5)">Document view</div>
<svg style="left:231.5px;top:172.0px" width="9" height="11" ><path d="M2.200 5v-1.800a2.300 2.300 0 0 1 4.600 0v.6" fill="none" stroke="#7291b6" stroke-width="1.300"/><rect x=".8" y="4.800" width="7" height="5.200" rx=".6" fill="#7291b6"/><rect x="3.800" y="6.300" width="1.200" height="2.200" fill="#2a374c"/></svg>
<svg style="left:243.5px;top:172.0px" width="11" height="11" ><path d="M1.700 1.700 L9 9 M9 1.700 L1.700 9" stroke="#8db4de" stroke-width="2.900" fill="none"/></svg>
<svg style="left:11.5px;top:168px" width="16" height="18" ><path d="M1 0.800h2.800v3.400h-2.800z" fill="#eaf2fb"/><path d="M2.500 4.200v10.500h7 M2.500 9h7" fill="none" stroke="#fff" stroke-width="1.200"/><path d="M9 9l2.400-1.800 2.400 1.800-2.400 1.800z M9 14.700l2.400-1.800 2.400 1.800-2.400 1.800z" fill="#eaf2fb"/></svg>
<div class="a" style="left:1px;top:358.5px;width:258px;height:1.5px;background:#8a99ae"></div>
<div class="a" style="left:1px;top:360px;width:258px;height:2px;background:#27324a"></div>
<div class="a" style="left:1px;top:361.5px;width:257.5px;height:194.0px;background:#323f54"></div>
<div class="a" style="left:1px;top:361.5px;width:257.5px;height:25px;background:#2a374c"></div>
<div class="t sf" style="left:39.3px;top:367.5px;font-size:12.2px;font-weight:700;line-height:16px;color:#fff;text-shadow:0 1px 1px rgba(0,0,0,.5)">History</div>
<svg style="left:231.5px;top:370.0px" width="9" height="11" ><path d="M2.200 5v-1.800a2.300 2.300 0 0 1 4.600 0v.6" fill="none" stroke="#7291b6" stroke-width="1.300"/><rect x=".8" y="4.800" width="7" height="5.200" rx=".6" fill="#7291b6"/><rect x="3.800" y="6.300" width="1.200" height="2.200" fill="#2a374c"/></svg>
<svg style="left:243.5px;top:370.0px" width="11" height="11" ><path d="M1.700 1.700 L9 9 M9 1.700 L1.700 9" stroke="#8db4de" stroke-width="2.900" fill="none"/></svg>
<svg style="left:11.5px;top:367.5px" width="17" height="15" ><path d="M1 2h7 M1 5.500h6 M1 9h6 M1 12.500h7" stroke="#dfe7f0" stroke-width="1.200"/><path d="M10.500 1.500 Q16.500 7.500 10.500 13.500" fill="none" stroke="#dfe7f0" stroke-width="1.500"/><path d="M8.500 1l3.300-.3-.5 3z" fill="#dfe7f0"/></svg>
<div class="a" style="left:1px;top:555.5px;width:258px;height:1.5px;background:#7d8da3"></div>
<div class="a" style="left:0;top:162.5px;width:1px;height:394px;background:#7f8b9d"></div>
<svg style="left:8.5px;top:199.5px" width="9" height="9" ><path d="M4.300 1v7 M0.800 4.500h7" stroke="#c9d1db" stroke-width="1.300"/></svg>
<svg style="left:31px;top:196px" width="13" height="16" ><path d="M1 1h7l4 4v10H1z" fill="#a9cdf0" stroke="#1f2a3b" stroke-width=".8"/><path d="M8 1v4h4" fill="#dcebfa" stroke="#1f2a3b" stroke-width=".5"/></svg>
<div class="t sf" style="left:51.3px;top:196.5px;font-size:13px;line-height:16px;color:#fff;text-shadow:0 1px 1px rgba(0,0,0,.45)">Document 1</div>
<div class="t sf" style="left:9px;top:393.5px;font-size:13px;line-height:16px;color:#fff;text-shadow:0 1px 1px rgba(0,0,0,.45)">New document</div>
<div class="a" style="left:0;top:557px;width:993px;height:21px;border-radius:0 0 4px 4px;background:linear-gradient(#45566b,#3c4b5f 50%,#364456)"></div>
<div class="t" style="left:6px;top:559.5px;font-size:13px;line-height:16px;color:#edf1f6;text-shadow:0 1px 1px rgba(0,0,0,.5)">Ready</div>
<svg style="left:980px;top:563px" width="13" height="14" ><rect x="9.0" y="0.5" width="2.500" height="2.500" fill="#5d6c82"/><rect x="9.0" y="5.0" width="2.500" height="2.500" fill="#5d6c82"/><rect x="4.5" y="5.0" width="2.500" height="2.500" fill="#5d6c82"/><rect x="9.0" y="9.5" width="2.500" height="2.500" fill="#5d6c82"/><rect x="4.5" y="9.5" width="2.500" height="2.500" fill="#5d6c82"/><rect x="0.0" y="9.5" width="2.500" height="2.500" fill="#5d6c82"/></svg>
<div class="a" style="left:392px;top:205px;width:302px;height:162px;box-sizing:border-box;border:1px solid #8296b0;border-radius:3px;background:#34455c;box-shadow:7px 7px 10px rgba(8,14,24,.88)"></div>
<div class="a" style="left:393px;top:206px;width:300px;height:24px;border-radius:2px 2px 0 0;background:#435b7b"></div>
<div class="t sf" style="left:418.6px;top:210px;font-size:12px;font-weight:700;line-height:16px;color:#fff;text-shadow:0 1px 1px rgba(0,0,0,.45)">SEMyElementApp</div>
<svg style="left:638.5px;top:212px" width="11" height="11" ><path d="M0.500 0.500h8l2 2v8h-10z" fill="#7e9cc2"/><rect x="2.500" y="1" width="5" height="3" fill="#435b7b"/><rect x="2" y="6" width="6.500" height="4" fill="#435b7b" opacity=".7"/></svg>
<svg style="left:652.5px;top:211.5px" width="9" height="11" ><path d="M2.200 5v-1.800a2.300 2.300 0 0 1 4.600 0v.6" fill="none" stroke="#7e9cc2" stroke-width="1.300"/><rect x=".8" y="4.800" width="7" height="5.200" rx=".6" fill="#7e9cc2"/><rect x="3.800" y="6.300" width="1.200" height="2.200" fill="#41587a"/></svg>
<div class="t" style="left:666px;top:209.5px;font-size:12.500px;font-weight:700;line-height:16px;color:#7e9cc2;text-shadow:0 0 .6px #7e9cc2">?</div>
<svg style="left:677.5px;top:212px" width="11" height="11" ><path d="M1.700 1.700 L9 9 M9 1.700 L1.700 9" stroke="#8fb5e0" stroke-width="2.900" fill="none"/></svg>
<div class="t sf" style="left:403.8px;top:283.5px;font-size:12.800px;line-height:16px;color:#fff;text-shadow:0 1px 1px rgba(0,0,0,.4)">SAMSON Element generator pro tip: modify me</div>
<svg style="left:680px;top:352.5px" width="13" height="14" ><rect x="9.0" y="0.5" width="2.500" height="2.500" fill="#5a6c85"/><rect x="9.0" y="5.0" width="2.500" height="2.500" fill="#5a6c85"/><rect x="4.5" y="5.0" width="2.500" height="2.500" fill="#5a6c85"/><rect x="9.0" y="9.5" width="2.500" height="2.500" fill="#5a6c85"/><rect x="4.5" y="9.5" width="2.500" height="2.500" fill="#5a6c85"/><rect x="0.0" y="9.5" width="2.500" height="2.500" fill="#5a6c85"/></svg>
</div>
<!--/SAMSON-->
</body></html>
